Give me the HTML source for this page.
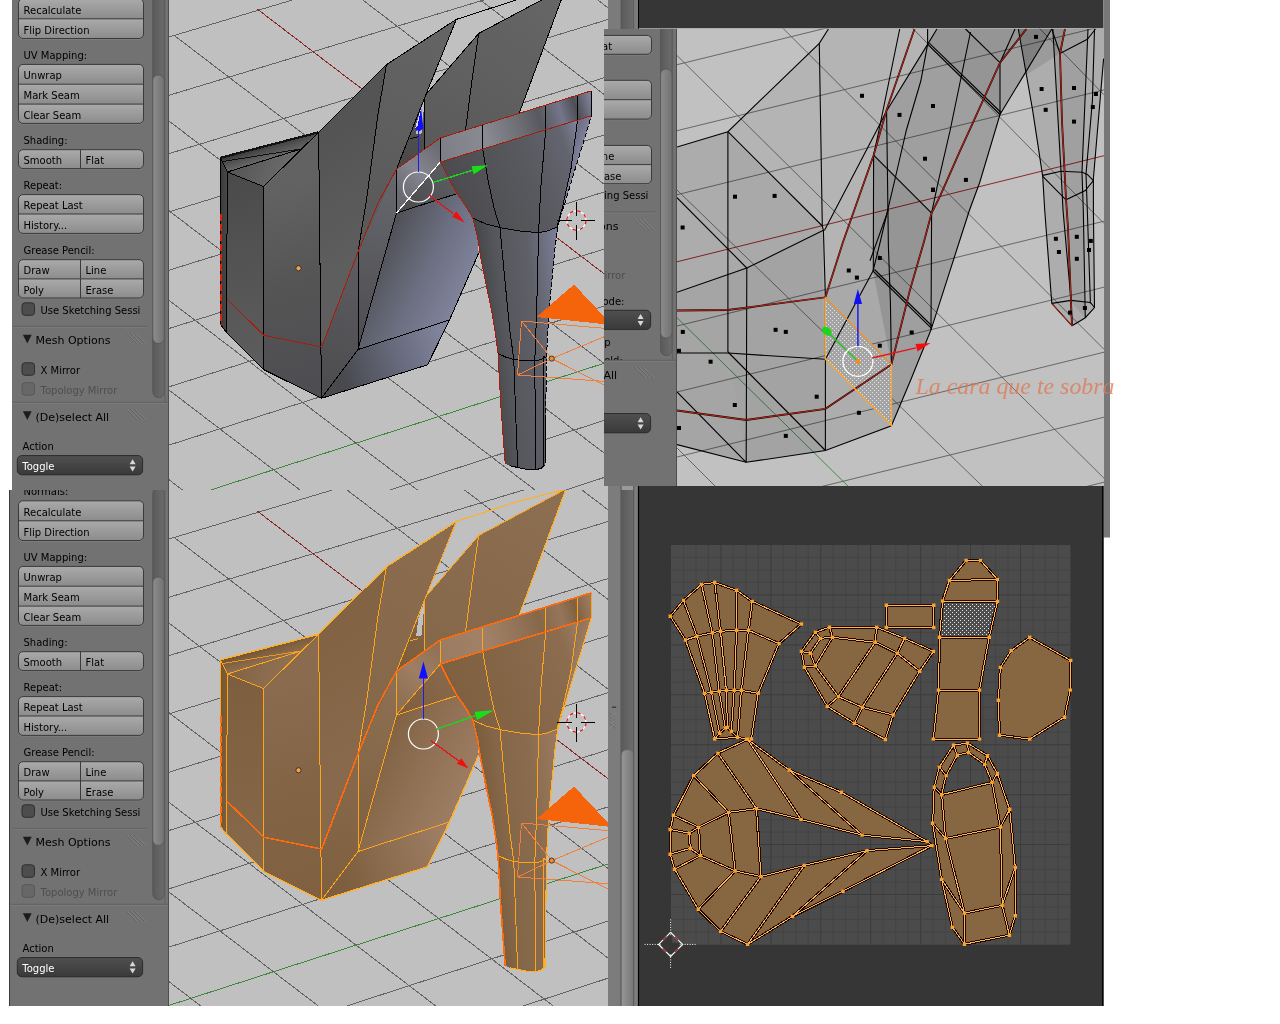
<!DOCTYPE html>
<html><head><meta charset="utf-8"><title>Blender UV unwrap</title>
<style>html,body{margin:0;padding:0;background:#fff;}svg{display:block;filter:contrast(1);font-family:"DejaVu Sans","Liberation Sans",sans-serif;}</style>
</head><body>
<svg width="1280" height="1024" viewBox="0 0 1280 1024">
<defs>
<linearGradient id="gb" x1="0" y1="0" x2="0" y2="1"><stop offset="0" stop-color="#a9a9a9"/><stop offset="1" stop-color="#8b8b8b"/></linearGradient>
<linearGradient id="gd" x1="0" y1="0" x2="0" y2="1"><stop offset="0" stop-color="#505050"/><stop offset="1" stop-color="#393939"/></linearGradient>
<linearGradient id="gtrack" x1="0" y1="0" x2="1" y2="0"><stop offset="0" stop-color="#5a5a5a"/><stop offset="1" stop-color="#6c6c6c"/></linearGradient>
<linearGradient id="gthumb" x1="0" y1="0" x2="1" y2="0"><stop offset="0" stop-color="#8c8c8c"/><stop offset="1" stop-color="#727272"/></linearGradient>
<linearGradient id="gstrip" x1="0" y1="0" x2="1" y2="0"><stop offset="0" stop-color="#808080"/><stop offset="1" stop-color="#6e6e6e"/></linearGradient>
<linearGradient id="gthumb2" x1="0" y1="0" x2="1" y2="0"><stop offset="0" stop-color="#979797"/><stop offset="1" stop-color="#777777"/></linearGradient>
<pattern id="dots" x="0" y="0" width="4" height="4" patternUnits="userSpaceOnUse"><rect width="4" height="4" fill="#4d4d4d"/><rect x="0" y="0" width="1" height="1" fill="#e6e6e6"/><rect x="2" y="2" width="1" height="1" fill="#e6e6e6"/></pattern>
<pattern id="dotsb" x="0" y="0" width="4" height="4" patternUnits="userSpaceOnUse"><rect width="4" height="4" fill="#a4a4a4"/><rect x="0" y="0" width="1" height="1" fill="#e4e4e4"/><rect x="2" y="2" width="1" height="1" fill="#e4e4e4"/></pattern>
<linearGradient id="gbs1" x1="0" y1="0" x2="0" y2="1"><stop offset="0.0000" stop-color="#aaaaaa"/><stop offset="0.9999" stop-color="#8c8c8c"/></linearGradient>
<linearGradient id="gbs2" x1="0" y1="0" x2="0" y2="1"><stop offset="0.0000" stop-color="#aaaaaa"/><stop offset="0.4999" stop-color="#8c8c8c"/><stop offset="0.5000" stop-color="#aaaaaa"/><stop offset="0.9999" stop-color="#8c8c8c"/></linearGradient>
<linearGradient id="gbs3" x1="0" y1="0" x2="0" y2="1"><stop offset="0.0000" stop-color="#aaaaaa"/><stop offset="0.3332" stop-color="#8c8c8c"/><stop offset="0.3333" stop-color="#aaaaaa"/><stop offset="0.6666" stop-color="#8c8c8c"/><stop offset="0.6667" stop-color="#aaaaaa"/><stop offset="0.9999" stop-color="#8c8c8c"/></linearGradient>
<g id="pu">
<rect x="0.0" y="-20.0" width="170.0" height="540.0" fill="#727272" />
<text x="23.5" y="-6.6" fill="#000" font-size="10" >Normals:</text>
<rect x="18.5" y="0.0" width="125.0" height="39.7" rx="4.5" fill="#818181"/>
<rect x="18.5" y="-1.2" width="125.0" height="39.7" rx="4.5" fill="url(#gbs2)" stroke="#3a3a3a" stroke-width="1"/>
<text x="23.5" y="13.5" fill="#000" font-size="10" >Recalculate</text>
<line x1="18.5" y1="18.8" x2="143.5" y2="18.8" stroke="#3a3a3a" stroke-width="1" />
<text x="23.5" y="34.0" fill="#000" font-size="10" >Flip Direction</text>
<text x="23.5" y="59.2" fill="#000" font-size="10" >UV Mapping:</text>
<rect x="18.5" y="65.6" width="125.0" height="59.0" rx="4.5" fill="#818181"/>
<rect x="18.5" y="64.4" width="125.0" height="59.0" rx="4.5" fill="url(#gbs3)" stroke="#3a3a3a" stroke-width="1"/>
<text x="23.5" y="79.1" fill="#000" font-size="10" >Unwrap</text>
<line x1="18.5" y1="84.2" x2="143.5" y2="84.2" stroke="#3a3a3a" stroke-width="1" />
<text x="23.5" y="99.4" fill="#000" font-size="10" >Mark Seam</text>
<line x1="18.5" y1="104.1" x2="143.5" y2="104.1" stroke="#3a3a3a" stroke-width="1" />
<text x="23.5" y="119.3" fill="#000" font-size="10" >Clear Seam</text>
<text x="23.5" y="144.3" fill="#000" font-size="10" >Shading:</text>
<rect x="18.5" y="150.9" width="125.0" height="18.9" rx="4.5" fill="#818181"/>
<rect x="18.5" y="149.7" width="125.0" height="18.9" rx="4.5" fill="url(#gbs1)" stroke="#3a3a3a" stroke-width="1"/>
<text x="23.5" y="164.4" fill="#000" font-size="10" >Smooth</text>
<line x1="80.5" y1="149.7" x2="80.5" y2="168.6" stroke="#3a3a3a" stroke-width="1" />
<text x="85.5" y="164.4" fill="#000" font-size="10" >Flat</text>
<text x="23.5" y="189.0" fill="#000" font-size="10" >Repeat:</text>
<rect x="18.5" y="195.8" width="125.0" height="38.8" rx="4.5" fill="#818181"/>
<rect x="18.5" y="194.6" width="125.0" height="38.8" rx="4.5" fill="url(#gbs2)" stroke="#3a3a3a" stroke-width="1"/>
<text x="23.5" y="209.3" fill="#000" font-size="10" >Repeat Last</text>
<line x1="18.5" y1="214.0" x2="143.5" y2="214.0" stroke="#3a3a3a" stroke-width="1" />
<text x="23.5" y="229.2" fill="#000" font-size="10" >History...</text>
<text x="23.5" y="254.3" fill="#000" font-size="10" >Grease Pencil:</text>
<rect x="18.5" y="260.9" width="125.0" height="38.3" rx="4.5" fill="#818181"/>
<rect x="18.5" y="259.7" width="125.0" height="38.3" rx="4.5" fill="url(#gbs2)" stroke="#3a3a3a" stroke-width="1"/>
<text x="23.5" y="274.4" fill="#000" font-size="10" >Draw</text>
<line x1="80.5" y1="259.7" x2="80.5" y2="278.9" stroke="#3a3a3a" stroke-width="1" />
<text x="85.5" y="274.4" fill="#000" font-size="10" >Line</text>
<line x1="18.5" y1="278.9" x2="143.5" y2="278.9" stroke="#3a3a3a" stroke-width="1" />
<text x="23.5" y="294.1" fill="#000" font-size="10" >Poly</text>
<line x1="80.5" y1="278.9" x2="80.5" y2="298.0" stroke="#3a3a3a" stroke-width="1" />
<text x="85.5" y="294.1" fill="#000" font-size="10" >Erase</text>
<rect x="22.0" y="302.8" width="12.5" height="12.5" rx="3" fill="#4d4d4d" stroke="#2e2e2e" stroke-width="1"/>
<text x="40.5" y="313.8" fill="#000" font-size="10" >Use Sketching Sessi</text>
<line x1="12.0" y1="326.3" x2="147.5" y2="326.3" stroke="#5e5e5e" stroke-width="1" />
<line x1="12.0" y1="327.3" x2="147.5" y2="327.3" stroke="#7a7a7a" stroke-width="1" />
<polygon points="22.9,334.7 31.7,334.7 27.3,343.4" fill="#1c1c1c" />
<text x="35.5" y="344.0" fill="#000" font-size="11" >Mesh Options</text>
<line x1="126.0" y1="333.0" x2="137.0" y2="344.0" stroke="#646464" stroke-width="1" />
<line x1="127.2" y1="333.0" x2="138.2" y2="344.0" stroke="#828282" stroke-width="1" />
<line x1="130.0" y1="333.0" x2="141.0" y2="344.0" stroke="#646464" stroke-width="1" />
<line x1="131.2" y1="333.0" x2="142.2" y2="344.0" stroke="#828282" stroke-width="1" />
<line x1="134.0" y1="333.0" x2="145.0" y2="344.0" stroke="#646464" stroke-width="1" />
<line x1="135.2" y1="333.0" x2="146.2" y2="344.0" stroke="#828282" stroke-width="1" />
<rect x="22.0" y="362.8" width="12.5" height="12.5" rx="3" fill="#4d4d4d" stroke="#2e2e2e" stroke-width="1"/>
<text x="40.5" y="373.8" fill="#000" font-size="10" >X Mirror</text>
<rect x="22.0" y="382.7" width="12.5" height="12.5" rx="3" fill="#676767" stroke="#575757" stroke-width="1"/>
<text x="40.5" y="393.7" fill="#4e4e4e" font-size="10" >Topology Mirror</text>
<text x="23.5" y="419.3" fill="#000" font-size="10" >Edge Select Mode:</text>
<rect x="17.3" y="425.8" width="125.3" height="19.4" rx="4.5" fill="#818181"/>
<rect x="17.3" y="424.6" width="125.3" height="19.4" rx="4.5" fill="url(#gd)" stroke="#2b2b2b" stroke-width="1"/>
<polygon points="129.6,433.2 135.6,433.2 132.6,428.2" fill="#d8d8d8" />
<polygon points="129.6,435.4 135.6,435.4 132.6,440.4" fill="#d8d8d8" />
<rect x="22.0" y="449.5" width="12.5" height="12.5" rx="3" fill="#4d4d4d" stroke="#2e2e2e" stroke-width="1"/>
<text x="40.5" y="460.5" fill="#000" font-size="10" >Live Unwrap</text>
<text x="23.5" y="478.0" fill="#000" font-size="10" >Double Threshold:</text>
</g>
<g id="pl">
<rect x="0.0" y="402.5" width="170.0" height="120.0" fill="#727272" />
<line x1="0.0" y1="402.3" x2="170.0" y2="402.3" stroke="#5a5a5a" stroke-width="1" />
<line x1="0.0" y1="403.3" x2="170.0" y2="403.3" stroke="#7c7c7c" stroke-width="1" />
<polygon points="22.9,411.2 31.7,411.2 27.3,419.9" fill="#1c1c1c" />
<text x="35.5" y="420.5" fill="#000" font-size="11" >(De)select All</text>
<line x1="126.0" y1="409.0" x2="137.0" y2="420.0" stroke="#646464" stroke-width="1" />
<line x1="127.2" y1="409.0" x2="138.2" y2="420.0" stroke="#828282" stroke-width="1" />
<line x1="130.0" y1="409.0" x2="141.0" y2="420.0" stroke="#646464" stroke-width="1" />
<line x1="131.2" y1="409.0" x2="142.2" y2="420.0" stroke="#828282" stroke-width="1" />
<line x1="134.0" y1="409.0" x2="145.0" y2="420.0" stroke="#646464" stroke-width="1" />
<line x1="135.2" y1="409.0" x2="146.2" y2="420.0" stroke="#828282" stroke-width="1" />
<text x="22.5" y="449.5" fill="#000" font-size="10" >Action</text>
<rect x="17.3" y="456.8" width="125.3" height="19.3" rx="4.5" fill="#818181"/>
<rect x="17.3" y="455.6" width="125.3" height="19.3" rx="4.5" fill="url(#gd)" stroke="#2b2b2b" stroke-width="1"/>
<text x="22.3" y="469.9" fill="#fff" font-size="10" >Toggle</text>
<polygon points="129.6,464.2 135.6,464.2 132.6,459.2" fill="#d8d8d8" />
<polygon points="129.6,466.4 135.6,466.4 132.6,471.4" fill="#d8d8d8" />
</g>
<clipPath id="clipA"><rect x="12" y="0" width="596" height="490"/></clipPath>
<clipPath id="clipC"><rect x="9" y="490" width="599" height="516"/></clipPath>
<clipPath id="clipAv"><rect x="169" y="0" width="439" height="490"/></clipPath>
<clipPath id="clipCv"><rect x="169" y="490" width="439" height="516"/></clipPath>
<clipPath id="clipBp"><rect x="604" y="29" width="73" height="457"/></clipPath>
<clipPath id="clipBv"><rect x="677" y="28.5" width="427" height="457.5"/></clipPath>
<clipPath id="clipD"><rect x="639" y="486" width="464" height="520"/></clipPath>
</defs>
<rect x="0.0" y="0.0" width="1280.0" height="1024.0" fill="#ffffff" />
<g clip-path="url(#clipA)">
<g transform="translate(0,0)">
<use href="#pu"/>
<rect x="152.8" y="-14.0" width="11.5" height="411.5" rx="5.5" fill="url(#gtrack)" stroke="#525252" stroke-width="0.8"/>
<rect x="152.8" y="75.0" width="11.5" height="268.5" rx="5.5" fill="url(#gthumb)" stroke="#545454" stroke-width="0.8"/>
<line x1="164.9" y1="-20.0" x2="164.9" y2="402.0" stroke="#5e5e5e" stroke-width="0.8" />
<use href="#pl"/>
<line x1="168.6" y1="-20.0" x2="168.6" y2="520.0" stroke="#4a4a4a" stroke-width="1" />
</g>
<g clip-path="url(#clipAv)"><g transform="translate(0,0)" shape-rendering="crispEdges">
<rect x="160.0" y="-20.0" width="460.0" height="540.0" fill="#c0c0c0" />
<line x1="169.0" y1="678.3" x2="608.0" y2="533.3" stroke="#646464" stroke-width="1" />
<line x1="169.0" y1="620.0" x2="608.0" y2="476.2" stroke="#646464" stroke-width="1" />
<line x1="169.0" y1="561.7" x2="608.0" y2="419.1" stroke="#646464" stroke-width="1" />
<line x1="169.0" y1="503.4" x2="608.0" y2="362.0" stroke="#3d8a3d" stroke-width="1" />
<line x1="169.0" y1="445.1" x2="608.0" y2="304.9" stroke="#646464" stroke-width="1" />
<line x1="169.0" y1="386.8" x2="608.0" y2="247.8" stroke="#646464" stroke-width="1" />
<line x1="169.0" y1="328.5" x2="608.0" y2="190.7" stroke="#646464" stroke-width="1" />
<line x1="169.0" y1="270.2" x2="608.0" y2="133.7" stroke="#646464" stroke-width="1" />
<line x1="169.0" y1="211.9" x2="608.0" y2="76.6" stroke="#646464" stroke-width="1" />
<line x1="169.0" y1="153.6" x2="608.0" y2="19.5" stroke="#646464" stroke-width="1" />
<line x1="169.0" y1="95.3" x2="608.0" y2="-37.6" stroke="#646464" stroke-width="1" />
<line x1="169.0" y1="37.0" x2="608.0" y2="-94.7" stroke="#646464" stroke-width="1" />
<line x1="-321.5" y1="195.1" x2="91.2" y2="510.0" stroke="#646464" stroke-width="1" />
<line x1="-238.8" y1="168.5" x2="208.7" y2="510.0" stroke="#646464" stroke-width="1" />
<line x1="-156.1" y1="142.0" x2="326.2" y2="510.0" stroke="#646464" stroke-width="1" />
<line x1="-73.4" y1="115.4" x2="443.7" y2="510.0" stroke="#646464" stroke-width="1" />
<line x1="9.3" y1="88.9" x2="561.2" y2="510.0" stroke="#646464" stroke-width="1" />
<line x1="92.0" y1="62.3" x2="678.7" y2="510.0" stroke="#646464" stroke-width="1" />
<line x1="174.7" y1="35.8" x2="796.2" y2="510.0" stroke="#646464" stroke-width="1" />
<line x1="257.4" y1="9.2" x2="913.7" y2="510.0" stroke="#8a2a2a" stroke-width="1" />
<line x1="340.1" y1="-17.3" x2="1031.2" y2="510.0" stroke="#646464" stroke-width="1" />
<line x1="422.8" y1="-43.9" x2="1148.7" y2="510.0" stroke="#646464" stroke-width="1" />
<line x1="505.5" y1="-70.4" x2="1266.2" y2="510.0" stroke="#646464" stroke-width="1" />
<line x1="588.2" y1="-97.0" x2="1383.7" y2="510.0" stroke="#646464" stroke-width="1" />
<linearGradient id="f1" gradientUnits="userSpaceOnUse" x1="424.0" y1="150.0" x2="478.0" y2="40.0"><stop offset="0" stop-color="#5a5a5a"/><stop offset="1" stop-color="#636363"/></linearGradient>
<polygon points="424.5,148.9 424.5,97.5 425.9,94.5 478.7,33.5 465.5,130.2" fill="url(#f1)" />
<linearGradient id="f2" gradientUnits="userSpaceOnUse" x1="470.0" y1="120.0" x2="560.0" y2="0.0"><stop offset="0" stop-color="#5c5c5c"/><stop offset="1" stop-color="#666666"/></linearGradient>
<polygon points="478.7,33.5 566.0,-13.0 519.3,113.0 465.5,130.2" fill="url(#f2)" />
<linearGradient id="f3" gradientUnits="userSpaceOnUse" x1="400.0" y1="170.0" x2="425.0" y2="100.0"><stop offset="0" stop-color="#474747"/><stop offset="1" stop-color="#585858"/></linearGradient>
<polygon points="425.9,94.5 424.5,97.5 424.5,148.9 396.5,169.0" fill="url(#f3)" />
<polygon points="424.8,98.0 421.5,133.5 416.0,134.5 418.2,117.0" fill="#c0c0c0" />
<linearGradient id="f4" gradientUnits="userSpaceOnUse" x1="320.0" y1="140.0" x2="385.0" y2="240.0"><stop offset="0" stop-color="#545454"/><stop offset="1" stop-color="#5e5e5e"/></linearGradient>
<polygon points="318.6,132.3 386.5,64.6 358.0,252.0 321.7,347.0 320.0,300.0" fill="url(#f4)" />
<linearGradient id="f5" gradientUnits="userSpaceOnUse" x1="370.0" y1="220.0" x2="450.0" y2="30.0"><stop offset="0" stop-color="#5a5a5a"/><stop offset="1" stop-color="#646464"/></linearGradient>
<polygon points="386.5,64.6 456.3,19.4 425.9,94.5 396.5,169.0 358.0,252.0" fill="url(#f5)" />
<linearGradient id="f6" gradientUnits="userSpaceOnUse" x1="262.0" y1="143.0" x2="268.0" y2="163.0"><stop offset="0" stop-color="#262626"/><stop offset="0.35" stop-color="#4a4a4a"/><stop offset="1" stop-color="#727272"/></linearGradient>
<polygon points="220.3,157.8 318.6,132.3 301.2,148.9 227.4,172.0" fill="url(#f6)" />
<linearGradient id="f7" gradientUnits="userSpaceOnUse" x1="240.0" y1="165.0" x2="290.0" y2="185.0"><stop offset="0" stop-color="#585858"/><stop offset="1" stop-color="#6e6e6e"/></linearGradient>
<polygon points="227.4,172.0 301.2,148.9 263.5,186.5" fill="url(#f7)" />
<linearGradient id="f8" gradientUnits="userSpaceOnUse" x1="220.0" y1="200.0" x2="228.0" y2="200.0"><stop offset="0" stop-color="#3a3a3a"/><stop offset="1" stop-color="#4a4a4a"/></linearGradient>
<polygon points="220.3,157.8 227.4,172.0 226.4,332.3 221.0,325.0 220.6,240.0" fill="url(#f8)" />
<linearGradient id="f9" gradientUnits="userSpaceOnUse" x1="227.0" y1="180.0" x2="268.0" y2="360.0"><stop offset="0" stop-color="#4b4b4b"/><stop offset="1" stop-color="#5d5d5d"/></linearGradient>
<polygon points="227.4,172.0 263.5,186.5 264.0,369.8 226.4,332.3" fill="url(#f9)" />
<linearGradient id="f10" gradientUnits="userSpaceOnUse" x1="270.0" y1="190.0" x2="320.0" y2="395.0"><stop offset="0" stop-color="#626262"/><stop offset="0.45" stop-color="#555555"/><stop offset="1" stop-color="#4d4d52"/></linearGradient>
<polygon points="263.5,186.5 301.2,148.9 318.6,132.3 320.4,300.0 321.7,347.0 321.5,398.3 264.0,369.8" fill="url(#f10)" />
<linearGradient id="f11" gradientUnits="userSpaceOnUse" x1="325.0" y1="380.0" x2="358.0" y2="260.0"><stop offset="0" stop-color="#4e4e50"/><stop offset="1" stop-color="#5c5c62"/></linearGradient>
<polygon points="321.7,347.0 358.0,252.0 358.0,349.5 321.5,398.3" fill="url(#f11)" />
<linearGradient id="f12" gradientUnits="userSpaceOnUse" x1="362.0" y1="330.0" x2="398.0" y2="180.0"><stop offset="0" stop-color="#505052"/><stop offset="1" stop-color="#66676e"/></linearGradient>
<polygon points="358.0,252.0 396.5,169.0 396.5,213.0 358.0,349.5" fill="url(#f12)" />
<linearGradient id="f13" gradientUnits="userSpaceOnUse" x1="380.0" y1="250.0" x2="470.0" y2="295.0"><stop offset="0" stop-color="#505157"/><stop offset="0.5" stop-color="#6c6f81"/><stop offset="1" stop-color="#8387a0"/></linearGradient>
<polygon points="396.5,213.0 457.1,193.6 466.0,206.5 472.9,218.2 477.5,237.0 478.7,253.0 449.5,320.0 358.0,349.5" fill="url(#f13)" />
<linearGradient id="f14" gradientUnits="userSpaceOnUse" x1="345.0" y1="380.0" x2="445.0" y2="345.0"><stop offset="0" stop-color="#494a50"/><stop offset="0.55" stop-color="#686b7d"/><stop offset="1" stop-color="#80849c"/></linearGradient>
<polygon points="358.0,349.5 449.5,320.0 427.5,364.8 321.5,398.3" fill="url(#f14)" />
<linearGradient id="f15" gradientUnits="userSpaceOnUse" x1="400.0" y1="195.0" x2="440.0" y2="150.0"><stop offset="0" stop-color="#6a6b72"/><stop offset="0.5" stop-color="#84858e"/><stop offset="1" stop-color="#6c6d74"/></linearGradient>
<polygon points="396.5,169.0 440.3,138.0 440.4,162.0 396.5,213.0" fill="url(#f15)" />
<linearGradient id="f16" gradientUnits="userSpaceOnUse" x1="400.0" y1="210.0" x2="455.0" y2="175.0"><stop offset="0" stop-color="#4a4a4c"/><stop offset="1" stop-color="#5c5d62"/></linearGradient>
<polygon points="396.5,213.0 440.4,162.0 448.5,178.0 457.1,193.6" fill="url(#f16)" />
<linearGradient id="f17" gradientUnits="userSpaceOnUse" x1="440.0" y1="150.0" x2="591.0" y2="103.0"><stop offset="0" stop-color="#7e7f86"/><stop offset="0.3" stop-color="#898a92"/><stop offset="0.52" stop-color="#6e6f75"/><stop offset="0.66" stop-color="#58595e"/><stop offset="0.8" stop-color="#74758a"/><stop offset="0.9" stop-color="#4e4e56"/><stop offset="1" stop-color="#7c7e94"/></linearGradient>
<polygon points="440.3,138.0 591.4,90.8 591.4,115.8 440.4,162.0" fill="url(#f17)" />
<linearGradient id="f18" gradientUnits="userSpaceOnUse" x1="470.0" y1="300.0" x2="560.0" y2="290.0"><stop offset="0" stop-color="#3b3b3d"/><stop offset="0.35" stop-color="#56575c"/><stop offset="0.7" stop-color="#5f6068"/><stop offset="1" stop-color="#787b92"/></linearGradient>
<polygon points="440.4,162.0 448.5,178.0 457.1,193.6 466.0,206.5 472.9,218.2 477.5,237.0 480.7,257.0 486.0,284.0 491.9,311.9 495.5,334.0 498.0,353.4 501.0,408.0 505.2,463.6 510.0,465.8 517.7,467.5 526.0,469.2 535.6,469.8 541.0,468.3 545.0,465.2 545.6,420.0 546.6,356.6 547.7,332.0 550.0,300.0 552.8,271.0 555.0,248.0 557.9,226.6 561.0,214.0 565.0,203.0 573.0,176.0 582.0,147.0 591.4,115.8" fill="url(#f18)" />
<linearGradient id="f19" gradientUnits="userSpaceOnUse" x1="450.0" y1="200.0" x2="590.0" y2="150.0"><stop offset="0" stop-color="#4b4b4e"/><stop offset="0.55" stop-color="#58595e"/><stop offset="0.85" stop-color="#63646e"/><stop offset="1" stop-color="#8286a0"/></linearGradient>
<polygon points="440.4,162.0 482.7,149.1 545.7,129.8 591.4,115.8 582.0,147.0 573.0,176.0 565.0,203.0 557.9,226.6 538.6,232.7 500.0,227.6 472.9,218.2 457.1,193.6" fill="url(#f19)" />
<linearGradient id="f20" gradientUnits="userSpaceOnUse" x1="565.0" y1="170.0" x2="580.0" y2="175.0"><stop offset="0" stop-color="#70728a"/><stop offset="1" stop-color="#8a8da6"/></linearGradient>
<polygon points="577.6,120.0 591.4,115.8 582.0,147.0 573.0,176.0 565.0,203.0 557.9,226.6 557.0,227.0 563.0,205.0 571.0,168.6" fill="url(#f20)" />
<polyline points="220.3,157.8 318.6,132.3" fill="none" stroke="#111" stroke-width="2.2" />
<polyline points="220.3,157.8 227.4,172.0" fill="none" stroke="#000000" stroke-width="1" />
<polyline points="227.4,172.0 263.5,186.5" fill="none" stroke="#000000" stroke-width="1" />
<polyline points="227.4,172.0 301.2,148.9" fill="none" stroke="#000000" stroke-width="1" />
<polyline points="263.5,186.5 318.6,132.3" fill="none" stroke="#000000" stroke-width="1" />
<polyline points="222.3,161.6 301.2,148.9" fill="none" stroke="#000000" stroke-width="0.8" />
<polyline points="227.4,172.0 226.4,332.3" fill="none" stroke="#000000" stroke-width="1" />
<polyline points="263.5,186.5 264.0,369.8" fill="none" stroke="#000000" stroke-width="1" />
<polyline points="318.6,132.3 320.4,300.0 321.5,398.3" fill="none" stroke="#000000" stroke-width="1" />
<polyline points="220.3,157.8 220.6,240.0 221.0,325.0 226.4,332.3 264.0,369.8 321.5,398.3 427.5,364.8 449.5,320.0" fill="none" stroke="#000000" stroke-width="1" />
<polyline points="321.5,398.3 358.0,349.5" fill="none" stroke="#000000" stroke-width="1" />
<polyline points="358.0,349.5 449.5,320.0" fill="none" stroke="#000000" stroke-width="1" />
<polyline points="358.0,252.0 358.0,349.5" fill="none" stroke="#000000" stroke-width="1" />
<polyline points="358.0,349.5 396.5,213.0" fill="none" stroke="#000000" stroke-width="1" />
<polyline points="318.6,132.3 386.5,64.6 456.3,19.4" fill="none" stroke="#000000" stroke-width="1" />
<polyline points="386.5,64.6 378.0,114.0 366.5,200.0 358.0,252.0" fill="none" stroke="#000000" stroke-width="1" />
<polyline points="456.3,19.4 425.9,94.5 396.5,169.0" fill="none" stroke="#000000" stroke-width="1" />
<polyline points="456.3,19.4 516.3,0.0 566.0,-13.0" fill="none" stroke="#000000" stroke-width="1" />
<polyline points="425.9,94.5 478.7,33.5 566.0,-13.0" fill="none" stroke="#000000" stroke-width="1" />
<polyline points="478.7,33.5 472.0,80.0 465.5,130.2" fill="none" stroke="#000000" stroke-width="1" />
<polyline points="566.0,-13.0 519.3,113.0" fill="none" stroke="#000000" stroke-width="1" />
<polyline points="424.5,97.5 424.5,148.9" fill="none" stroke="#000000" stroke-width="1" />
<polyline points="409.6,139.1 418.4,136.5" fill="none" stroke="#000000" stroke-width="1" />
<polyline points="396.5,169.0 396.5,213.0" fill="none" stroke="#000000" stroke-width="1" />
<polyline points="440.3,138.0 440.3,162.0" fill="none" stroke="#000000" stroke-width="1" />
<polyline points="482.7,124.8 482.7,149.1" fill="none" stroke="#000000" stroke-width="1" />
<polyline points="545.7,105.1 545.7,129.8" fill="none" stroke="#000000" stroke-width="1" />
<polyline points="577.6,95.1 577.6,120.0" fill="none" stroke="#000000" stroke-width="1" />
<polyline points="591.4,90.8 591.4,115.8" fill="none" stroke="#000000" stroke-width="1" />
<polyline points="396.5,213.0 457.1,193.6" fill="none" stroke="#000000" stroke-width="1" />
<polyline points="478.7,253.0 449.5,320.0" fill="none" stroke="#000000" stroke-width="1" />
<polyline points="482.7,149.1 488.0,180.0 494.0,208.0 500.0,227.6 504.0,271.0 510.0,332.0 513.8,359.5 515.5,410.0 517.7,467.5" fill="none" stroke="#000000" stroke-width="1" />
<polyline points="545.7,129.8 540.6,190.0 538.6,232.7 536.6,311.9 534.8,361.0 535.6,469.8" fill="none" stroke="#000000" stroke-width="1" />
<polyline points="577.6,120.0 571.0,168.6 563.0,205.0 557.0,227.0" fill="none" stroke="#000000" stroke-width="1" />
<polyline points="472.9,218.2 486.0,224.0 500.0,227.6 520.0,231.0 538.6,232.7 549.0,230.5 557.9,226.6" fill="none" stroke="#000000" stroke-width="1" />
<polyline points="498.0,353.4 506.0,357.2 513.8,359.5 524.0,360.8 534.8,361.0 541.0,359.5 546.6,356.6" fill="none" stroke="#000000" stroke-width="1" />
<polyline points="544.0,356.5 543.4,467.5" fill="none" stroke="#000000" stroke-width="1" />
<polyline points="510.0,465.8 517.7,467.5 526.0,469.2 535.6,469.8 541.0,468.3 545.0,465.2" fill="none" stroke="#000000" stroke-width="1" />
<polyline points="545.6,420.0 546.6,356.6 547.7,332.0 550.0,300.0 552.8,271.0 555.0,248.0 557.9,226.6 561.0,214.0 565.0,203.0 573.0,176.0 582.0,147.0 591.4,115.8" fill="none" stroke="#000000" stroke-width="1" stroke-dasharray="5 2"/>
<polyline points="545.0,465.2 545.6,420.0" fill="none" stroke="#000000" stroke-width="1" />
<polyline points="440.4,162.0 396.5,213.0" fill="none" stroke="#ffffff" stroke-width="1.2" />
<polyline points="226.4,298.7 264.0,335.3 321.7,347.0 358.0,252.0 378.0,203.0 396.5,169.0 440.3,138.0 591.4,90.8" fill="none" stroke="#a81c0c" stroke-width="1.0" />
<polyline points="591.4,115.8 440.4,162.0" fill="none" stroke="#a81c0c" stroke-width="1.0" />
<polyline points="440.4,162.0 448.5,178.0 457.1,193.6 466.0,206.5 472.9,218.2 477.5,237.0 480.7,257.0 486.0,284.0 491.9,311.9 495.5,334.0 498.0,353.4 501.0,408.0 505.2,463.6" fill="none" stroke="#a81c0c" stroke-width="1.0" />
<polyline points="221.0,214.0 221.2,300.0 221.0,325.0" fill="none" stroke="#d8200a" stroke-width="1.6" stroke-dasharray="7 3"/>
<circle shape-rendering="geometricPrecision" cx="298.5" cy="268.3" r="2.6" fill="#f0a050" stroke="#222" stroke-width="0.8"/>
<polygon points="574.0,284.5 536.6,317.0 612.0,325.0" fill="#f5640a" />
<polyline points="521.5,321.0 517.5,375.0" fill="none" stroke="#ee7f3c" stroke-width="1" />
<polyline points="521.5,321.0 612.0,329.0" fill="none" stroke="#ee7f3c" stroke-width="1" />
<polyline points="517.5,375.0 612.0,382.0" fill="none" stroke="#ee7f3c" stroke-width="1" />
<polyline points="521.5,321.0 551.7,358.6 612.0,389.0" fill="none" stroke="#ee7f3c" stroke-width="1" />
<polyline points="517.5,375.0 551.7,358.6 612.0,333.5" fill="none" stroke="#ee7f3c" stroke-width="1" />
<circle shape-rendering="geometricPrecision" cx="551.7" cy="358.6" r="2.6" fill="#f08a30" stroke="#222" stroke-width="0.8"/>
<circle shape-rendering="geometricPrecision" cx="576.4" cy="220.5" r="9.6" fill="none" stroke="#ffffff" stroke-width="1.2"/>
<circle shape-rendering="geometricPrecision" cx="576.4" cy="220.5" r="9.6" fill="none" stroke="#e01010" stroke-width="1.2" stroke-dasharray="3.8 3.8"/>
<line x1="580.9" y1="220.5" x2="595.4" y2="220.5" stroke="#000" stroke-width="1" />
<line x1="571.9" y1="220.5" x2="557.4" y2="220.5" stroke="#000" stroke-width="1" />
<line x1="576.4" y1="225.0" x2="576.4" y2="239.5" stroke="#000" stroke-width="1" />
<line x1="576.4" y1="216.0" x2="576.4" y2="201.5" stroke="#000" stroke-width="1" />
<circle shape-rendering="geometricPrecision" cx="418.4" cy="187.0" r="15" fill="none" stroke="#fff" stroke-width="1.2"/>
<line x1="418.4" y1="172.0" x2="418.4" y2="130.0" stroke="#1c1cf0" stroke-width="1.4" />
<polygon points="421.0,108.0 415.0,128.5 419.0,131.5 423.5,128.5" fill="#1010ff" shape-rendering="geometricPrecision"/>
<polygon points="421.0,108.0 415.0,128.5 417.5,126.0" fill="#dde" />
<line x1="432.8" y1="182.6" x2="474.0" y2="169.8" stroke="#20d020" stroke-width="1.4" />
<polygon points="488.0,165.3 471.6,166.2 473.6,174.2" fill="#18e018" shape-rendering="geometricPrecision"/>
<line x1="428.5" y1="194.7" x2="453.0" y2="213.5" stroke="#e01818" stroke-width="1.4" />
<polygon points="464.6,222.6 456.4,211.2 452.0,216.8" fill="#f01010" shape-rendering="geometricPrecision"/>
</g></g>
</g>
<g clip-path="url(#clipC)">
<g transform="translate(0,502)">
<use href="#pu"/>
<rect x="152.8" y="-14.0" width="11.5" height="411.5" rx="5.5" fill="url(#gtrack)" stroke="#525252" stroke-width="0.8"/>
<rect x="152.8" y="75.0" width="11.5" height="268.5" rx="5.5" fill="url(#gthumb)" stroke="#545454" stroke-width="0.8"/>
<line x1="164.9" y1="-20.0" x2="164.9" y2="402.0" stroke="#5e5e5e" stroke-width="0.8" />
<use href="#pl"/>
<line x1="168.6" y1="-20.0" x2="168.6" y2="520.0" stroke="#4a4a4a" stroke-width="1" />
</g>
<g clip-path="url(#clipCv)"><g transform="translate(0,502)" shape-rendering="crispEdges">
<rect x="160.0" y="-20.0" width="460.0" height="540.0" fill="#c0c0c0" />
<line x1="169.0" y1="678.3" x2="608.0" y2="533.3" stroke="#646464" stroke-width="1" />
<line x1="169.0" y1="620.0" x2="608.0" y2="476.2" stroke="#646464" stroke-width="1" />
<line x1="169.0" y1="561.7" x2="608.0" y2="419.1" stroke="#646464" stroke-width="1" />
<line x1="169.0" y1="503.4" x2="608.0" y2="362.0" stroke="#3d8a3d" stroke-width="1" />
<line x1="169.0" y1="445.1" x2="608.0" y2="304.9" stroke="#646464" stroke-width="1" />
<line x1="169.0" y1="386.8" x2="608.0" y2="247.8" stroke="#646464" stroke-width="1" />
<line x1="169.0" y1="328.5" x2="608.0" y2="190.7" stroke="#646464" stroke-width="1" />
<line x1="169.0" y1="270.2" x2="608.0" y2="133.7" stroke="#646464" stroke-width="1" />
<line x1="169.0" y1="211.9" x2="608.0" y2="76.6" stroke="#646464" stroke-width="1" />
<line x1="169.0" y1="153.6" x2="608.0" y2="19.5" stroke="#646464" stroke-width="1" />
<line x1="169.0" y1="95.3" x2="608.0" y2="-37.6" stroke="#646464" stroke-width="1" />
<line x1="169.0" y1="37.0" x2="608.0" y2="-94.7" stroke="#646464" stroke-width="1" />
<line x1="-321.5" y1="195.1" x2="91.2" y2="510.0" stroke="#646464" stroke-width="1" />
<line x1="-238.8" y1="168.5" x2="208.7" y2="510.0" stroke="#646464" stroke-width="1" />
<line x1="-156.1" y1="142.0" x2="326.2" y2="510.0" stroke="#646464" stroke-width="1" />
<line x1="-73.4" y1="115.4" x2="443.7" y2="510.0" stroke="#646464" stroke-width="1" />
<line x1="9.3" y1="88.9" x2="561.2" y2="510.0" stroke="#646464" stroke-width="1" />
<line x1="92.0" y1="62.3" x2="678.7" y2="510.0" stroke="#646464" stroke-width="1" />
<line x1="174.7" y1="35.8" x2="796.2" y2="510.0" stroke="#646464" stroke-width="1" />
<line x1="257.4" y1="9.2" x2="913.7" y2="510.0" stroke="#8a2a2a" stroke-width="1" />
<line x1="340.1" y1="-17.3" x2="1031.2" y2="510.0" stroke="#646464" stroke-width="1" />
<line x1="422.8" y1="-43.9" x2="1148.7" y2="510.0" stroke="#646464" stroke-width="1" />
<line x1="505.5" y1="-70.4" x2="1266.2" y2="510.0" stroke="#646464" stroke-width="1" />
<line x1="588.2" y1="-97.0" x2="1383.7" y2="510.0" stroke="#646464" stroke-width="1" />
<linearGradient id="f21" gradientUnits="userSpaceOnUse" x1="424.0" y1="150.0" x2="478.0" y2="40.0"><stop offset="0" stop-color="#856749"/><stop offset="1" stop-color="#8a6c4e"/></linearGradient>
<polygon points="424.5,148.9 424.5,97.5 425.9,94.5 478.7,33.5 465.5,130.2" fill="url(#f21)" />
<linearGradient id="f22" gradientUnits="userSpaceOnUse" x1="470.0" y1="120.0" x2="560.0" y2="0.0"><stop offset="0" stop-color="#87684a"/><stop offset="1" stop-color="#8c6e50"/></linearGradient>
<polygon points="478.7,33.5 566.0,-13.0 519.3,113.0 465.5,130.2" fill="url(#f22)" />
<linearGradient id="f23" gradientUnits="userSpaceOnUse" x1="400.0" y1="170.0" x2="425.0" y2="100.0"><stop offset="0" stop-color="#7b5d3c"/><stop offset="1" stop-color="#846647"/></linearGradient>
<polygon points="425.9,94.5 424.5,97.5 424.5,148.9 396.5,169.0" fill="url(#f23)" />
<polygon points="424.8,98.0 421.5,133.5 416.0,134.5 418.2,117.0" fill="#c0c0c0" />
<linearGradient id="f24" gradientUnits="userSpaceOnUse" x1="320.0" y1="140.0" x2="385.0" y2="240.0"><stop offset="0" stop-color="#826445"/><stop offset="1" stop-color="#88694b"/></linearGradient>
<polygon points="318.6,132.3 386.5,64.6 358.0,252.0 321.7,347.0 320.0,300.0" fill="url(#f24)" />
<linearGradient id="f25" gradientUnits="userSpaceOnUse" x1="370.0" y1="220.0" x2="450.0" y2="30.0"><stop offset="0" stop-color="#856749"/><stop offset="1" stop-color="#8b6c4f"/></linearGradient>
<polygon points="386.5,64.6 456.3,19.4 425.9,94.5 396.5,169.0 358.0,252.0" fill="url(#f25)" />
<linearGradient id="f26" gradientUnits="userSpaceOnUse" x1="262.0" y1="143.0" x2="268.0" y2="163.0"><stop offset="0" stop-color="#684b27"/><stop offset="0.35" stop-color="#7c5e3e"/><stop offset="1" stop-color="#937458"/></linearGradient>
<polygon points="220.3,157.8 318.6,132.3 301.2,148.9 227.4,172.0" fill="url(#f26)" />
<linearGradient id="f27" gradientUnits="userSpaceOnUse" x1="240.0" y1="165.0" x2="290.0" y2="185.0"><stop offset="0" stop-color="#846647"/><stop offset="1" stop-color="#917255"/></linearGradient>
<polygon points="227.4,172.0 301.2,148.9 263.5,186.5" fill="url(#f27)" />
<linearGradient id="f28" gradientUnits="userSpaceOnUse" x1="220.0" y1="200.0" x2="228.0" y2="200.0"><stop offset="0" stop-color="#735634"/><stop offset="1" stop-color="#7c5e3e"/></linearGradient>
<polygon points="220.3,157.8 227.4,172.0 226.4,332.3 221.0,325.0 220.6,240.0" fill="url(#f28)" />
<linearGradient id="f29" gradientUnits="userSpaceOnUse" x1="227.0" y1="180.0" x2="268.0" y2="360.0"><stop offset="0" stop-color="#7d5f3f"/><stop offset="1" stop-color="#87694b"/></linearGradient>
<polygon points="227.4,172.0 263.5,186.5 264.0,369.8 226.4,332.3" fill="url(#f29)" />
<linearGradient id="f30" gradientUnits="userSpaceOnUse" x1="270.0" y1="190.0" x2="320.0" y2="395.0"><stop offset="0" stop-color="#8a6b4e"/><stop offset="0.45" stop-color="#836445"/><stop offset="1" stop-color="#7f6141"/></linearGradient>
<polygon points="263.5,186.5 301.2,148.9 318.6,132.3 320.4,300.0 321.7,347.0 321.5,398.3 264.0,369.8" fill="url(#f30)" />
<linearGradient id="f31" gradientUnits="userSpaceOnUse" x1="325.0" y1="380.0" x2="358.0" y2="260.0"><stop offset="0" stop-color="#7f6141"/><stop offset="1" stop-color="#88694b"/></linearGradient>
<polygon points="321.7,347.0 358.0,252.0 358.0,349.5 321.5,398.3" fill="url(#f31)" />
<linearGradient id="f32" gradientUnits="userSpaceOnUse" x1="362.0" y1="330.0" x2="398.0" y2="180.0"><stop offset="0" stop-color="#806243"/><stop offset="1" stop-color="#8d6f52"/></linearGradient>
<polygon points="358.0,252.0 396.5,169.0 396.5,213.0 358.0,349.5" fill="url(#f32)" />
<linearGradient id="f33" gradientUnits="userSpaceOnUse" x1="380.0" y1="250.0" x2="470.0" y2="295.0"><stop offset="0" stop-color="#816344"/><stop offset="0.5" stop-color="#917256"/><stop offset="1" stop-color="#9e7f65"/></linearGradient>
<polygon points="396.5,213.0 457.1,193.6 466.0,206.5 472.9,218.2 477.5,237.0 478.7,253.0 449.5,320.0 358.0,349.5" fill="url(#f33)" />
<linearGradient id="f34" gradientUnits="userSpaceOnUse" x1="345.0" y1="380.0" x2="445.0" y2="345.0"><stop offset="0" stop-color="#7d5f3f"/><stop offset="0.55" stop-color="#8f7053"/><stop offset="1" stop-color="#9d7d63"/></linearGradient>
<polygon points="358.0,349.5 449.5,320.0 427.5,364.8 321.5,398.3" fill="url(#f34)" />
<linearGradient id="f35" gradientUnits="userSpaceOnUse" x1="400.0" y1="195.0" x2="440.0" y2="150.0"><stop offset="0" stop-color="#907154"/><stop offset="0.5" stop-color="#9e7f65"/><stop offset="1" stop-color="#917256"/></linearGradient>
<polygon points="396.5,169.0 440.3,138.0 440.4,162.0 396.5,213.0" fill="url(#f35)" />
<linearGradient id="f36" gradientUnits="userSpaceOnUse" x1="400.0" y1="210.0" x2="455.0" y2="175.0"><stop offset="0" stop-color="#7d5f3f"/><stop offset="1" stop-color="#88694b"/></linearGradient>
<polygon points="396.5,213.0 440.4,162.0 448.5,178.0 457.1,193.6" fill="url(#f36)" />
<linearGradient id="f37" gradientUnits="userSpaceOnUse" x1="440.0" y1="150.0" x2="591.0" y2="103.0"><stop offset="0" stop-color="#9b7c61"/><stop offset="0.3" stop-color="#a18268"/><stop offset="0.52" stop-color="#927357"/><stop offset="0.66" stop-color="#866749"/><stop offset="0.8" stop-color="#95765b"/><stop offset="0.9" stop-color="#806242"/><stop offset="1" stop-color="#9a7b60"/></linearGradient>
<polygon points="440.3,138.0 591.4,90.8 591.4,115.8 440.4,162.0" fill="url(#f37)" />
<linearGradient id="f38" gradientUnits="userSpaceOnUse" x1="470.0" y1="300.0" x2="560.0" y2="290.0"><stop offset="0" stop-color="#745735"/><stop offset="0.35" stop-color="#846648"/><stop offset="0.7" stop-color="#8a6b4d"/><stop offset="1" stop-color="#98795e"/></linearGradient>
<polygon points="440.4,162.0 448.5,178.0 457.1,193.6 466.0,206.5 472.9,218.2 477.5,237.0 480.7,257.0 486.0,284.0 491.9,311.9 495.5,334.0 498.0,353.4 501.0,408.0 505.2,463.6 510.0,465.8 517.7,467.5 526.0,469.2 535.6,469.8 541.0,468.3 545.0,465.2 545.6,420.0 546.6,356.6 547.7,332.0 550.0,300.0 552.8,271.0 555.0,248.0 557.9,226.6 561.0,214.0 565.0,203.0 573.0,176.0 582.0,147.0 591.4,115.8" fill="url(#f38)" />
<linearGradient id="f39" gradientUnits="userSpaceOnUse" x1="450.0" y1="200.0" x2="590.0" y2="150.0"><stop offset="0" stop-color="#7e6040"/><stop offset="0.55" stop-color="#866749"/><stop offset="0.85" stop-color="#8c6d50"/><stop offset="1" stop-color="#9e7e64"/></linearGradient>
<polygon points="440.4,162.0 482.7,149.1 545.7,129.8 591.4,115.8 582.0,147.0 573.0,176.0 565.0,203.0 557.9,226.6 538.6,232.7 500.0,227.6 472.9,218.2 457.1,193.6" fill="url(#f39)" />
<linearGradient id="f40" gradientUnits="userSpaceOnUse" x1="565.0" y1="170.0" x2="580.0" y2="175.0"><stop offset="0" stop-color="#937458"/><stop offset="1" stop-color="#a28369"/></linearGradient>
<polygon points="577.6,120.0 591.4,115.8 582.0,147.0 573.0,176.0 565.0,203.0 557.9,226.6 557.0,227.0 563.0,205.0 571.0,168.6" fill="url(#f40)" />
<polyline points="220.3,157.8 318.6,132.3" fill="none" stroke="#ffa31a" stroke-width="1.4" />
<polyline points="220.3,157.8 227.4,172.0" fill="none" stroke="#ffa31a" stroke-width="1" />
<polyline points="227.4,172.0 263.5,186.5" fill="none" stroke="#ffa31a" stroke-width="1" />
<polyline points="227.4,172.0 301.2,148.9" fill="none" stroke="#ffa31a" stroke-width="1" />
<polyline points="263.5,186.5 318.6,132.3" fill="none" stroke="#ffa31a" stroke-width="1" />
<polyline points="222.3,161.6 301.2,148.9" fill="none" stroke="#ffa31a" stroke-width="0.8" />
<polyline points="227.4,172.0 226.4,332.3" fill="none" stroke="#ffa31a" stroke-width="1" />
<polyline points="263.5,186.5 264.0,369.8" fill="none" stroke="#ffa31a" stroke-width="1" />
<polyline points="318.6,132.3 320.4,300.0 321.5,398.3" fill="none" stroke="#ffa31a" stroke-width="1" />
<polyline points="220.3,157.8 220.6,240.0 221.0,325.0 226.4,332.3 264.0,369.8 321.5,398.3 427.5,364.8 449.5,320.0" fill="none" stroke="#ffa31a" stroke-width="1" />
<polyline points="321.5,398.3 358.0,349.5" fill="none" stroke="#ffa31a" stroke-width="1" />
<polyline points="358.0,349.5 449.5,320.0" fill="none" stroke="#ffa31a" stroke-width="1" />
<polyline points="358.0,252.0 358.0,349.5" fill="none" stroke="#ffa31a" stroke-width="1" />
<polyline points="358.0,349.5 396.5,213.0" fill="none" stroke="#ffa31a" stroke-width="1" />
<polyline points="318.6,132.3 386.5,64.6 456.3,19.4" fill="none" stroke="#ffa31a" stroke-width="1" />
<polyline points="386.5,64.6 378.0,114.0 366.5,200.0 358.0,252.0" fill="none" stroke="#ffa31a" stroke-width="1" />
<polyline points="456.3,19.4 425.9,94.5 396.5,169.0" fill="none" stroke="#ffa31a" stroke-width="1" />
<polyline points="456.3,19.4 516.3,0.0 566.0,-13.0" fill="none" stroke="#ffa31a" stroke-width="1" />
<polyline points="425.9,94.5 478.7,33.5 566.0,-13.0" fill="none" stroke="#ffa31a" stroke-width="1" />
<polyline points="478.7,33.5 472.0,80.0 465.5,130.2" fill="none" stroke="#ffa31a" stroke-width="1" />
<polyline points="566.0,-13.0 519.3,113.0" fill="none" stroke="#ffa31a" stroke-width="1" />
<polyline points="424.5,97.5 424.5,148.9" fill="none" stroke="#ffa31a" stroke-width="1" />
<polyline points="409.6,139.1 418.4,136.5" fill="none" stroke="#ffa31a" stroke-width="1" />
<polyline points="396.5,169.0 396.5,213.0" fill="none" stroke="#ffa31a" stroke-width="1" />
<polyline points="440.3,138.0 440.3,162.0" fill="none" stroke="#ffa31a" stroke-width="1" />
<polyline points="482.7,124.8 482.7,149.1" fill="none" stroke="#ffa31a" stroke-width="1" />
<polyline points="545.7,105.1 545.7,129.8" fill="none" stroke="#ffa31a" stroke-width="1" />
<polyline points="577.6,95.1 577.6,120.0" fill="none" stroke="#ffa31a" stroke-width="1" />
<polyline points="591.4,90.8 591.4,115.8" fill="none" stroke="#ffa31a" stroke-width="1" />
<polyline points="396.5,213.0 457.1,193.6" fill="none" stroke="#ffa31a" stroke-width="1" />
<polyline points="478.7,253.0 449.5,320.0" fill="none" stroke="#ffa31a" stroke-width="1" />
<polyline points="482.7,149.1 488.0,180.0 494.0,208.0 500.0,227.6 504.0,271.0 510.0,332.0 513.8,359.5 515.5,410.0 517.7,467.5" fill="none" stroke="#ffa31a" stroke-width="1" />
<polyline points="545.7,129.8 540.6,190.0 538.6,232.7 536.6,311.9 534.8,361.0 535.6,469.8" fill="none" stroke="#ffa31a" stroke-width="1" />
<polyline points="577.6,120.0 571.0,168.6 563.0,205.0 557.0,227.0" fill="none" stroke="#ffa31a" stroke-width="1" />
<polyline points="472.9,218.2 486.0,224.0 500.0,227.6 520.0,231.0 538.6,232.7 549.0,230.5 557.9,226.6" fill="none" stroke="#ffa31a" stroke-width="1" />
<polyline points="498.0,353.4 506.0,357.2 513.8,359.5 524.0,360.8 534.8,361.0 541.0,359.5 546.6,356.6" fill="none" stroke="#ffa31a" stroke-width="1" />
<polyline points="544.0,356.5 543.4,467.5" fill="none" stroke="#ffa31a" stroke-width="1" />
<polyline points="510.0,465.8 517.7,467.5 526.0,469.2 535.6,469.8 541.0,468.3 545.0,465.2" fill="none" stroke="#ffa31a" stroke-width="1" />
<polyline points="545.6,420.0 546.6,356.6 547.7,332.0 550.0,300.0 552.8,271.0 555.0,248.0 557.9,226.6 561.0,214.0 565.0,203.0 573.0,176.0 582.0,147.0 591.4,115.8" fill="none" stroke="#ffa31a" stroke-width="1" />
<polyline points="545.0,465.2 545.6,420.0" fill="none" stroke="#ffa31a" stroke-width="1" />
<polyline points="440.4,162.0 396.5,213.0" fill="none" stroke="#ffa31a" stroke-width="1" />
<polyline points="226.4,298.7 264.0,335.3 321.7,347.0 358.0,252.0 378.0,203.0 396.5,169.0 440.3,138.0 591.4,90.8" fill="none" stroke="#ff6a0d" stroke-width="1.6" />
<polyline points="591.4,115.8 440.4,162.0" fill="none" stroke="#ff6a0d" stroke-width="1.6" />
<polyline points="440.4,162.0 448.5,178.0 457.1,193.6 466.0,206.5 472.9,218.2 477.5,237.0 480.7,257.0 486.0,284.0 491.9,311.9 495.5,334.0 498.0,353.4 501.0,408.0 505.2,463.6" fill="none" stroke="#ff6a0d" stroke-width="1.6" />
<polyline points="221.0,214.0 221.2,300.0 221.0,325.0" fill="none" stroke="#ff6a0d" stroke-width="1.6" stroke-dasharray="7 3"/>
<polyline points="220.3,157.8 318.6,132.3 386.5,64.6 456.3,19.4" fill="none" stroke="#ffb028" stroke-width="1.4" />
<polyline points="456.3,19.4 516.3,0.0 566.0,-13.0 519.3,113.0" fill="none" stroke="#ffb028" stroke-width="1.2" />
<polyline points="591.4,115.8 591.4,115.8 582.0,147.0 573.0,176.0 565.0,203.0 561.0,214.0 557.9,226.6 555.0,248.0 552.8,271.0 550.0,300.0 547.7,332.0 546.6,356.6 545.6,420.0 545.0,465.2 541.0,468.3 535.6,469.8 526.0,469.2 517.7,467.5 510.0,465.8" fill="none" stroke="#ffb028" stroke-width="1.2" />
<polyline points="226.4,332.3 264.0,369.8 321.5,398.3 427.5,364.8 449.5,320.0 478.7,253.0" fill="none" stroke="#ffb028" stroke-width="1.4" />
<circle shape-rendering="geometricPrecision" cx="298.5" cy="268.3" r="2.6" fill="#f0a050" stroke="#222" stroke-width="0.8"/>
<polygon points="574.0,284.5 536.6,317.0 612.0,325.0" fill="#f5640a" />
<polyline points="521.5,321.0 517.5,375.0" fill="none" stroke="#ee7f3c" stroke-width="1" />
<polyline points="521.5,321.0 612.0,329.0" fill="none" stroke="#ee7f3c" stroke-width="1" />
<polyline points="517.5,375.0 612.0,382.0" fill="none" stroke="#ee7f3c" stroke-width="1" />
<polyline points="521.5,321.0 551.7,358.6 612.0,389.0" fill="none" stroke="#ee7f3c" stroke-width="1" />
<polyline points="517.5,375.0 551.7,358.6 612.0,333.5" fill="none" stroke="#ee7f3c" stroke-width="1" />
<circle shape-rendering="geometricPrecision" cx="551.7" cy="358.6" r="2.6" fill="#f08a30" stroke="#222" stroke-width="0.8"/>
<circle shape-rendering="geometricPrecision" cx="576.4" cy="220.5" r="9.6" fill="none" stroke="#ffffff" stroke-width="1.2"/>
<circle shape-rendering="geometricPrecision" cx="576.4" cy="220.5" r="9.6" fill="none" stroke="#e01010" stroke-width="1.2" stroke-dasharray="3.8 3.8"/>
<line x1="580.9" y1="220.5" x2="595.4" y2="220.5" stroke="#000" stroke-width="1" />
<line x1="571.9" y1="220.5" x2="557.4" y2="220.5" stroke="#000" stroke-width="1" />
<line x1="576.4" y1="225.0" x2="576.4" y2="239.5" stroke="#000" stroke-width="1" />
<line x1="576.4" y1="216.0" x2="576.4" y2="201.5" stroke="#000" stroke-width="1" />
<circle shape-rendering="geometricPrecision" cx="423.4" cy="232.0" r="15" fill="none" stroke="#fff" stroke-width="1.2"/>
<line x1="423.4" y1="217.0" x2="423.4" y2="176.0" stroke="#1c1cf0" stroke-width="1.4" />
<polygon points="423.4,159.5 418.8,176.5 428.0,176.5" fill="#1010ff" shape-rendering="geometricPrecision"/>
<line x1="437.0" y1="227.0" x2="476.0" y2="213.5" stroke="#20d020" stroke-width="1.4" />
<polygon points="494.0,208.3 474.6,209.8 477.0,218.0" fill="#18e018" shape-rendering="geometricPrecision"/>
<line x1="430.7" y1="238.4" x2="458.5" y2="258.8" stroke="#e01818" stroke-width="1.4" />
<polygon points="468.6,266.6 461.2,256.2 456.8,261.8" fill="#f01010" shape-rendering="geometricPrecision"/>
</g></g>
</g>
<line x1="9.5" y1="490.0" x2="9.5" y2="1006.0" stroke="#3a3a3a" stroke-width="1" />
<rect x="608.0" y="0.0" width="31.0" height="29.0" fill="#7b7b7b" />
<rect x="621.0" y="0.0" width="12.5" height="29.0" fill="url(#gtrack)" />
<line x1="621.0" y1="0.0" x2="621.0" y2="29.0" stroke="#555" stroke-width="0.8" />
<line x1="633.6" y1="0.0" x2="633.6" y2="29.0" stroke="#555" stroke-width="0.8" />
<rect x="638.0" y="0.0" width="465.5" height="28.5" fill="#363636" />
<line x1="638.5" y1="0.0" x2="638.5" y2="28.5" stroke="#000" stroke-width="1" />
<rect x="1103.5" y="0.0" width="6.5" height="537.5" fill="#787878" />
<g clip-path="url(#clipBp)">
<g transform="translate(508,-114.3)">
<use href="#pu"/>
</g>
<rect x="604.0" y="360.5" width="73.0" height="126.0" fill="#727272" />
<rect x="660.6" y="20.0" width="11.5" height="335.5" rx="5.5" fill="url(#gtrack)" stroke="#525252" stroke-width="0.8"/>
<rect x="660.6" y="69.0" width="11.5" height="269.0" rx="5.5" fill="url(#gthumb)" stroke="#545454" stroke-width="0.8"/>
<line x1="672.7" y1="29.0" x2="672.7" y2="360.0" stroke="#5e5e5e" stroke-width="0.8" />
<g transform="translate(508,-42)">
<use href="#pl"/>
</g>
<line x1="676.6" y1="29.0" x2="676.6" y2="486.0" stroke="#4a4a4a" stroke-width="1" />
</g>
<g clip-path="url(#clipBv)">
<rect x="677.0" y="28.0" width="427.0" height="458.0" fill="#c1c1c1" />
<line x1="677.0" y1="-1.0" x2="1104.0" y2="-105.8" stroke="#5c5c5c" stroke-width="0.9" />
<line x1="677.0" y1="64.7" x2="1104.0" y2="-40.1" stroke="#5c5c5c" stroke-width="0.9" />
<line x1="677.0" y1="130.7" x2="1104.0" y2="25.9" stroke="#5c5c5c" stroke-width="0.9" />
<line x1="677.0" y1="194.7" x2="1104.0" y2="89.9" stroke="#5c5c5c" stroke-width="0.9" />
<line x1="677.0" y1="326.0" x2="1104.0" y2="221.2" stroke="#5c5c5c" stroke-width="0.9" />
<line x1="677.0" y1="392.0" x2="1104.0" y2="287.2" stroke="#5c5c5c" stroke-width="0.9" />
<line x1="677.0" y1="457.0" x2="1104.0" y2="352.2" stroke="#5c5c5c" stroke-width="0.9" />
<line x1="677.0" y1="522.0" x2="1104.0" y2="417.2" stroke="#5c5c5c" stroke-width="0.9" />
<line x1="677.0" y1="587.0" x2="1104.0" y2="482.2" stroke="#5c5c5c" stroke-width="0.9" />
<line x1="677.0" y1="261.8" x2="1104.0" y2="155.7" stroke="#8e2626" stroke-width="1" />
<line x1="677.0" y1="448.0" x2="1104.0" y2="875.0" stroke="#5c5c5c" stroke-width="0.9" />
<line x1="677.0" y1="190.0" x2="1104.0" y2="604.2" stroke="#5c5c5c" stroke-width="0.9" />
<line x1="677.0" y1="55.5" x2="1104.0" y2="478.2" stroke="#5c5c5c" stroke-width="0.9" />
<line x1="677.0" y1="-77.7" x2="1104.0" y2="349.3" stroke="#5c5c5c" stroke-width="0.9" />
<line x1="677.0" y1="-212.0" x2="1104.0" y2="223.5" stroke="#5c5c5c" stroke-width="0.9" />
<line x1="677.0" y1="-345.0" x2="1104.0" y2="94.8" stroke="#5c5c5c" stroke-width="0.9" />
<line x1="677.0" y1="317.7" x2="1104.0" y2="738.3" stroke="#3f7f3f" stroke-width="0.9" />
<polygon points="677.0,147.0 727.9,131.7 819.3,43.4 828.4,29.0 1051.8,29.0 1000.0,114.5 979.7,182.5 969.5,210.0 931.0,329.8 910.7,380.0 891.4,425.7 825.4,450.5 746.2,462.3 677.0,444.6" fill="#000" fill-opacity="0.065"/>
<polygon points="677.0,147.0 727.9,131.7 727.9,352.0 746.2,462.3 677.0,444.6" fill="#000" fill-opacity="0.04"/>
<polygon points="727.9,131.7 822.3,226.0 825.4,450.5 746.2,462.3 727.9,352.0" fill="#000" fill-opacity="0.06"/>
<polygon points="677.0,292.3 746.8,268.0 823.4,230.3 825.4,297.3 891.4,364.4 891.4,425.7 825.4,450.5 746.2,462.3 677.0,444.6" fill="#000" fill-opacity="0.035"/>
<polygon points="886.6,111.0 927.6,44.4 936.9,29.0 1051.8,29.0 1000.0,114.5 979.7,182.5 964.5,228.0 931.0,329.8 910.7,380.0 891.4,425.7 891.4,364.4 873.0,271.0 873.6,155.2" fill="#000" fill-opacity="0.115"/>
<polygon points="927.6,44.4 927.6,29.0 1026.0,29.0 1000.0,62.7 1000.0,114.5" fill="#000" fill-opacity="0.06"/>
<polygon points="873.6,155.2 931.6,213.1 923.0,245.0 909.7,291.0 891.4,364.4 825.4,297.3 848.8,225.0" fill="#000" fill-opacity="0.06"/>
<polygon points="825.4,297.3 891.4,364.4 891.4,425.7 825.4,359.3" fill="url(#dotsb)" />
<polygon points="1018.3,29.0 1032.5,109.4 1042.7,176.4 1044.7,210.0 1051.8,303.4 1072.0,325.8 1085.3,317.7 1094.5,307.5 1093.4,210.0 1093.4,178.4 1104.0,58.6 1104.0,29.0" fill="#000" fill-opacity="0.10"/>
<polygon points="1052.8,29.0 1061.0,171.3 1063.0,210.0 1072.0,303.4 1085.3,317.7 1083.3,210.0 1082.0,172.0 1088.0,29.0" fill="#000" fill-opacity="0.07"/>
<polygon points="1018.3,29.0 1065.0,29.0 1060.0,53.5 1026.0,75.0" fill="#000" fill-opacity="0.10"/>
<polyline points="677.0,147.0 727.9,131.7 819.3,43.4 828.4,29.0" fill="none" stroke="#000" stroke-width="1.1" />
<polyline points="727.9,131.7 727.9,352.0" fill="none" stroke="#000" stroke-width="1.1" />
<polyline points="727.9,131.7 822.3,226.0" fill="none" stroke="#000" stroke-width="1.1" />
<polyline points="819.3,43.4 822.3,226.0 823.4,230.3 825.4,297.3 825.4,450.5" fill="none" stroke="#000" stroke-width="1.1" />
<polyline points="677.0,197.7 746.8,268.0 746.2,462.3" fill="none" stroke="#000" stroke-width="1.1" />
<polyline points="677.0,292.3 746.8,268.0 823.4,230.3" fill="none" stroke="#000" stroke-width="1.1" />
<polyline points="728.0,352.0 825.4,450.5" fill="none" stroke="#000" stroke-width="1.1" />
<polyline points="677.0,392.0 746.2,462.3" fill="none" stroke="#000" stroke-width="1.1" />
<polyline points="677.0,353.0 728.0,353.0 825.4,359.3" fill="none" stroke="#000" stroke-width="1.1" />
<polyline points="677.0,444.6 746.2,462.3 825.4,450.5 891.4,425.7 910.7,380.0 931.0,329.8 969.5,210.0 979.7,182.5 1000.0,114.5 1051.8,29.0" fill="none" stroke="#000" stroke-width="1.1" />
<polyline points="899.7,29.0 879.0,130.0 873.6,155.2 873.3,271.0" fill="none" stroke="#000" stroke-width="1.1" />
<polyline points="936.9,29.0 927.6,44.4 886.6,111.0 876.9,130.0 824.4,230.6" fill="none" stroke="#000" stroke-width="1.1" />
<polyline points="927.6,29.0 927.6,44.4" fill="none" stroke="#000" stroke-width="1.1" />
<polyline points="886.6,111.0 888.4,246.6 890.4,301.4 891.4,364.4" fill="none" stroke="#000" stroke-width="1.1" />
<polyline points="927.6,44.4 920.8,81.0 906.4,130.0 895.5,177.0 880.2,242.0 873.0,271.0" fill="none" stroke="#000" stroke-width="1.1" />
<polyline points="927.6,44.4 1000.0,114.5" fill="none" stroke="#000" stroke-width="1.1" />
<polyline points="929.2,43.2 1001.0,112.5" fill="none" stroke="#000" stroke-width="1.1" />
<polyline points="873.6,155.2 931.6,213.1" fill="none" stroke="#000" stroke-width="1.1" />
<polyline points="970.5,32.0 950.2,130.0 937.6,184.7 931.6,213.1 931.0,329.8" fill="none" stroke="#000" stroke-width="1.1" />
<polyline points="965.5,29.0 1000.0,62.7 1000.0,114.5" fill="none" stroke="#000" stroke-width="1.1" />
<polyline points="1015.0,29.0 1000.0,62.7" fill="none" stroke="#000" stroke-width="1.1" />
<polyline points="873.0,271.0 825.4,359.3" fill="none" stroke="#000" stroke-width="1.1" />
<polyline points="873.0,271.0 931.0,327.8" fill="none" stroke="#000" stroke-width="1.1" />
<polyline points="874.5,269.5 932.0,326.0" fill="none" stroke="#000" stroke-width="1.1" />
<polyline points="888.3,210.0 870.0,260.8" fill="none" stroke="#000" stroke-width="1.1" />
<polyline points="1018.3,29.0 1032.5,109.4 1042.7,176.4 1044.7,210.0 1051.8,303.4 1072.0,325.8 1085.3,317.7 1094.5,307.5 1093.4,210.0 1093.4,178.4 1103.6,58.6" fill="none" stroke="#000" stroke-width="1.1" />
<polyline points="1051.8,29.0 1060.0,53.5 1087.3,39.3 1095.5,29.0" fill="none" stroke="#000" stroke-width="1.1" />
<polyline points="1052.8,29.0 1061.0,171.3 1063.0,210.0 1071.0,300.4" fill="none" stroke="#000" stroke-width="1.1" />
<polyline points="1088.0,29.0 1082.0,172.0 1083.3,210.0 1085.3,317.7" fill="none" stroke="#000" stroke-width="1.1" />
<polyline points="1094.5,29.0 1092.4,101.0 1086.0,174.0 1087.3,210.0 1090.4,303.4" fill="none" stroke="#000" stroke-width="1.1" />
<polyline points="1042.7,175.4 1061.0,171.3 1082.3,172.3 1087.3,174.4 1093.4,180.5 1085.3,190.6 1066.0,199.8 1042.7,176.4" fill="none" stroke="#000" stroke-width="1.1" />
<polyline points="1051.8,303.4 1071.0,300.4 1090.4,302.4 1094.5,307.5" fill="none" stroke="#000" stroke-width="1.1" />
<polyline points="1071.0,300.4 1072.0,325.8" fill="none" stroke="#000" stroke-width="1.1" />
<polyline points="914.5,29.0 886.6,110.0 873.6,155.2 843.0,242.0 825.4,297.3 727.9,310.0 677.0,310.5" fill="none" stroke="#1a0000" stroke-width="1.8" />
<polyline points="914.5,29.0 886.6,110.0 873.6,155.2 843.0,242.0 825.4,297.3 727.9,310.0 677.0,310.5" fill="none" stroke="#e03020" stroke-width="0.8" />
<polyline points="1026.4,29.0 1000.0,62.7 971.6,125.6 960.0,150.8 940.3,195.6 931.6,213.1 923.9,242.0 909.7,291.0 891.4,364.4 853.8,389.8 825.4,408.8 746.2,420.0 677.0,410.5" fill="none" stroke="#1a0000" stroke-width="1.8" />
<polyline points="1026.4,29.0 1000.0,62.7 971.6,125.6 960.0,150.8 940.3,195.6 931.6,213.1 923.9,242.0 909.7,291.0 891.4,364.4 853.8,389.8 825.4,408.8 746.2,420.0 677.0,410.5" fill="none" stroke="#e03020" stroke-width="0.8" />
<polyline points="1065.0,29.0 1060.0,53.5 1062.0,121.6 1066.0,198.8 1068.0,228.0 1072.0,325.8" fill="none" stroke="#1a0000" stroke-width="1.8" />
<polyline points="1065.0,29.0 1060.0,53.5 1062.0,121.6 1066.0,198.8 1068.0,228.0 1072.0,325.8" fill="none" stroke="#e03020" stroke-width="0.8" />
<polyline points="1051.8,303.4 1072.0,325.8" fill="none" stroke="#c02010" stroke-width="1" />
<polyline points="825.4,297.3 891.4,364.4 891.4,425.7 825.4,359.3 825.4,297.3" fill="none" stroke="#ffa62a" stroke-width="1.3" />
<polyline points="825.4,297.3 891.4,364.4" fill="none" stroke="#e08a30" stroke-width="1" />
<rect x="860.0" y="93.8" width="4.0" height="4.0" fill="#000" />
<rect x="897.5" y="112.9" width="4.0" height="4.0" fill="#000" />
<rect x="923.0" y="156.7" width="4.0" height="4.0" fill="#000" />
<rect x="733.0" y="194.7" width="4.0" height="4.0" fill="#000" />
<rect x="772.6" y="193.9" width="4.0" height="4.0" fill="#000" />
<rect x="680.6" y="225.5" width="4.0" height="4.0" fill="#000" />
<rect x="1034.0" y="34.9" width="4.0" height="4.0" fill="#000" />
<rect x="1039.6" y="87.0" width="4.0" height="4.0" fill="#000" />
<rect x="1072.0" y="86.0" width="4.0" height="4.0" fill="#000" />
<rect x="1093.9" y="92.0" width="4.0" height="4.0" fill="#000" />
<rect x="1090.8" y="105.0" width="4.0" height="4.0" fill="#000" />
<rect x="1043.7" y="107.8" width="4.0" height="4.0" fill="#000" />
<rect x="1072.0" y="119.6" width="4.0" height="4.0" fill="#000" />
<rect x="931.0" y="104.0" width="4.0" height="4.0" fill="#000" />
<rect x="931.0" y="188.0" width="4.0" height="4.0" fill="#000" />
<rect x="963.9" y="177.9" width="4.0" height="4.0" fill="#000" />
<rect x="931.0" y="187.6" width="4.0" height="4.0" fill="#000" />
<rect x="846.8" y="268.5" width="4.0" height="4.0" fill="#000" />
<rect x="854.9" y="275.6" width="4.0" height="4.0" fill="#000" />
<rect x="877.8" y="256.0" width="4.0" height="4.0" fill="#000" />
<rect x="773.6" y="327.8" width="4.0" height="4.0" fill="#000" />
<rect x="783.8" y="329.9" width="4.0" height="4.0" fill="#000" />
<rect x="680.8" y="329.9" width="4.0" height="4.0" fill="#000" />
<rect x="677.0" y="348.8" width="4.0" height="4.0" fill="#000" />
<rect x="708.6" y="359.7" width="4.0" height="4.0" fill="#000" />
<rect x="877.8" y="343.7" width="4.0" height="4.0" fill="#000" />
<rect x="909.7" y="330.5" width="4.0" height="4.0" fill="#000" />
<rect x="814.7" y="394.7" width="4.0" height="4.0" fill="#000" />
<rect x="732.8" y="403.0" width="4.0" height="4.0" fill="#000" />
<rect x="856.9" y="410.8" width="4.0" height="4.0" fill="#000" />
<rect x="677.0" y="426.0" width="4.0" height="4.0" fill="#000" />
<rect x="783.8" y="433.9" width="4.0" height="4.0" fill="#000" />
<rect x="1053.9" y="236.8" width="4.0" height="4.0" fill="#000" />
<rect x="1074.8" y="234.8" width="4.0" height="4.0" fill="#000" />
<rect x="1088.8" y="238.9" width="4.0" height="4.0" fill="#000" />
<rect x="1087.0" y="248.0" width="4.0" height="4.0" fill="#000" />
<rect x="1056.9" y="250.0" width="4.0" height="4.0" fill="#000" />
<rect x="1074.8" y="256.8" width="4.0" height="4.0" fill="#000" />
<rect x="1068.0" y="310.6" width="4.0" height="4.0" fill="#000" />
<rect x="1082.9" y="306.0" width="4.0" height="4.0" fill="#000" />
<line x1="857.9" y1="361.3" x2="827.0" y2="331.5" stroke="#20c820" stroke-width="1.3" />
<ellipse cx="826.8" cy="331.2" rx="5.4" ry="3.8" transform="rotate(40 826.8 331.2)" fill="#18d818"/>
<circle cx="857.9" cy="361.3" r="15" fill="none" stroke="#fff" stroke-width="1.3"/>
<circle cx="857.9" cy="361.3" r="2.4" fill="#ff8a10"/>
<line x1="857.9" y1="346.3" x2="857.9" y2="304.0" stroke="#1c1cf0" stroke-width="1.5" />
<polygon points="857.9,289.0 853.8,304.0 862.0,304.0" fill="#1010f0" />
<line x1="872.0" y1="358.0" x2="916.0" y2="347.8" stroke="#e01818" stroke-width="1.3" />
<polygon points="930.5,343.0 915.5,344.0 917.5,351.5" fill="#f01010" />
</g>
<text x="915.5" y="394" fill="#dd7a55" fill-opacity="0.78" font-family="'Liberation Serif','DejaVu Serif',serif" font-style="italic" font-size="22.5" textLength="199" lengthAdjust="spacingAndGlyphs">La cara que te sobra</text>
<clipPath id="clipDs"><rect x="608" y="486" width="496" height="520"/></clipPath>
<g clip-path="url(#clipDs)">
<rect x="608.0" y="486.0" width="31.0" height="520.0" fill="url(#gstrip)" />
<rect x="608.0" y="486.0" width="13.0" height="520.0" fill="#7c7c7c" />
<rect x="621.3" y="486" width="12.2" height="270" fill="url(#gtrack)"/>
<rect x="621.3" y="486" width="12.2" height="4" fill="#9a9a9a"/>
<rect x="621.3" y="750" width="12.2" height="262" rx="5.5" fill="url(#gthumb2)"/>
<rect x="612.0" y="706.5" width="4.2" height="1.4" fill="#3a3a3a" />
<line x1="609.0" y1="713.0" x2="616.0" y2="718.0" stroke="#6a6a6a" stroke-width="0.9" />
<line x1="616.0" y1="713.0" x2="609.0" y2="718.0" stroke="#868686" stroke-width="0.9" />
<line x1="609.0" y1="716.5" x2="616.0" y2="721.5" stroke="#6a6a6a" stroke-width="0.9" />
<line x1="616.0" y1="716.5" x2="609.0" y2="721.5" stroke="#868686" stroke-width="0.9" />
<line x1="609.0" y1="720.0" x2="616.0" y2="725.0" stroke="#6a6a6a" stroke-width="0.9" />
<line x1="616.0" y1="720.0" x2="609.0" y2="725.0" stroke="#868686" stroke-width="0.9" />
<line x1="609.0" y1="723.5" x2="616.0" y2="728.5" stroke="#6a6a6a" stroke-width="0.9" />
<line x1="616.0" y1="723.5" x2="609.0" y2="728.5" stroke="#868686" stroke-width="0.9" />
<line x1="621.0" y1="486.0" x2="621.0" y2="1006.0" stroke="#505050" stroke-width="0.9" />
<line x1="633.8" y1="486.0" x2="633.8" y2="1006.0" stroke="#505050" stroke-width="0.9" />
<rect x="634.3" y="486.0" width="4.0" height="520.0" fill="#7d7d7d" />
<rect x="638.0" y="486.0" width="465.5" height="520.0" fill="#363636" />
<line x1="638.5" y1="486.0" x2="638.5" y2="1006.0" stroke="#000" stroke-width="1.2" />
<line x1="1102.8" y1="486.0" x2="1102.8" y2="1006.0" stroke="#000" stroke-width="1.4" />
</g>
<g clip-path="url(#clipD)">
<rect x="671.0" y="545.0" width="399.4" height="399.7" fill="#4b4b4b" />
<line x1="683.5" y1="545.0" x2="683.5" y2="944.4" stroke="#434343" stroke-width="0.8" />
<line x1="671.0" y1="557.5" x2="1070.4" y2="557.5" stroke="#434343" stroke-width="0.8" />
<line x1="696.0" y1="545.0" x2="696.0" y2="944.4" stroke="#434343" stroke-width="0.8" />
<line x1="671.0" y1="570.0" x2="1070.4" y2="570.0" stroke="#434343" stroke-width="0.8" />
<line x1="708.4" y1="545.0" x2="708.4" y2="944.4" stroke="#434343" stroke-width="0.8" />
<line x1="671.0" y1="582.4" x2="1070.4" y2="582.4" stroke="#434343" stroke-width="0.8" />
<line x1="720.9" y1="545.0" x2="720.9" y2="944.4" stroke="#3c3c3c" stroke-width="1.0" />
<line x1="671.0" y1="594.9" x2="1070.4" y2="594.9" stroke="#3c3c3c" stroke-width="1.0" />
<line x1="733.4" y1="545.0" x2="733.4" y2="944.4" stroke="#434343" stroke-width="0.8" />
<line x1="671.0" y1="607.4" x2="1070.4" y2="607.4" stroke="#434343" stroke-width="0.8" />
<line x1="745.9" y1="545.0" x2="745.9" y2="944.4" stroke="#434343" stroke-width="0.8" />
<line x1="671.0" y1="619.9" x2="1070.4" y2="619.9" stroke="#434343" stroke-width="0.8" />
<line x1="758.4" y1="545.0" x2="758.4" y2="944.4" stroke="#434343" stroke-width="0.8" />
<line x1="671.0" y1="632.4" x2="1070.4" y2="632.4" stroke="#434343" stroke-width="0.8" />
<line x1="770.9" y1="545.0" x2="770.9" y2="944.4" stroke="#3c3c3c" stroke-width="1.0" />
<line x1="671.0" y1="644.9" x2="1070.4" y2="644.9" stroke="#3c3c3c" stroke-width="1.0" />
<line x1="783.3" y1="545.0" x2="783.3" y2="944.4" stroke="#434343" stroke-width="0.8" />
<line x1="671.0" y1="657.3" x2="1070.4" y2="657.3" stroke="#434343" stroke-width="0.8" />
<line x1="795.8" y1="545.0" x2="795.8" y2="944.4" stroke="#434343" stroke-width="0.8" />
<line x1="671.0" y1="669.8" x2="1070.4" y2="669.8" stroke="#434343" stroke-width="0.8" />
<line x1="808.3" y1="545.0" x2="808.3" y2="944.4" stroke="#434343" stroke-width="0.8" />
<line x1="671.0" y1="682.3" x2="1070.4" y2="682.3" stroke="#434343" stroke-width="0.8" />
<line x1="820.8" y1="545.0" x2="820.8" y2="944.4" stroke="#3c3c3c" stroke-width="1.0" />
<line x1="671.0" y1="694.8" x2="1070.4" y2="694.8" stroke="#3c3c3c" stroke-width="1.0" />
<line x1="833.3" y1="545.0" x2="833.3" y2="944.4" stroke="#434343" stroke-width="0.8" />
<line x1="671.0" y1="707.3" x2="1070.4" y2="707.3" stroke="#434343" stroke-width="0.8" />
<line x1="845.7" y1="545.0" x2="845.7" y2="944.4" stroke="#434343" stroke-width="0.8" />
<line x1="671.0" y1="719.7" x2="1070.4" y2="719.7" stroke="#434343" stroke-width="0.8" />
<line x1="858.2" y1="545.0" x2="858.2" y2="944.4" stroke="#434343" stroke-width="0.8" />
<line x1="671.0" y1="732.2" x2="1070.4" y2="732.2" stroke="#434343" stroke-width="0.8" />
<line x1="870.7" y1="545.0" x2="870.7" y2="944.4" stroke="#3c3c3c" stroke-width="1.0" />
<line x1="671.0" y1="744.7" x2="1070.4" y2="744.7" stroke="#3c3c3c" stroke-width="1.0" />
<line x1="883.2" y1="545.0" x2="883.2" y2="944.4" stroke="#434343" stroke-width="0.8" />
<line x1="671.0" y1="757.2" x2="1070.4" y2="757.2" stroke="#434343" stroke-width="0.8" />
<line x1="895.7" y1="545.0" x2="895.7" y2="944.4" stroke="#434343" stroke-width="0.8" />
<line x1="671.0" y1="769.7" x2="1070.4" y2="769.7" stroke="#434343" stroke-width="0.8" />
<line x1="908.1" y1="545.0" x2="908.1" y2="944.4" stroke="#434343" stroke-width="0.8" />
<line x1="671.0" y1="782.1" x2="1070.4" y2="782.1" stroke="#434343" stroke-width="0.8" />
<line x1="920.6" y1="545.0" x2="920.6" y2="944.4" stroke="#3c3c3c" stroke-width="1.0" />
<line x1="671.0" y1="794.6" x2="1070.4" y2="794.6" stroke="#3c3c3c" stroke-width="1.0" />
<line x1="933.1" y1="545.0" x2="933.1" y2="944.4" stroke="#434343" stroke-width="0.8" />
<line x1="671.0" y1="807.1" x2="1070.4" y2="807.1" stroke="#434343" stroke-width="0.8" />
<line x1="945.6" y1="545.0" x2="945.6" y2="944.4" stroke="#434343" stroke-width="0.8" />
<line x1="671.0" y1="819.6" x2="1070.4" y2="819.6" stroke="#434343" stroke-width="0.8" />
<line x1="958.1" y1="545.0" x2="958.1" y2="944.4" stroke="#434343" stroke-width="0.8" />
<line x1="671.0" y1="832.1" x2="1070.4" y2="832.1" stroke="#434343" stroke-width="0.8" />
<line x1="970.5" y1="545.0" x2="970.5" y2="944.4" stroke="#3c3c3c" stroke-width="1.0" />
<line x1="671.0" y1="844.5" x2="1070.4" y2="844.5" stroke="#3c3c3c" stroke-width="1.0" />
<line x1="983.0" y1="545.0" x2="983.0" y2="944.4" stroke="#434343" stroke-width="0.8" />
<line x1="671.0" y1="857.0" x2="1070.4" y2="857.0" stroke="#434343" stroke-width="0.8" />
<line x1="995.5" y1="545.0" x2="995.5" y2="944.4" stroke="#434343" stroke-width="0.8" />
<line x1="671.0" y1="869.5" x2="1070.4" y2="869.5" stroke="#434343" stroke-width="0.8" />
<line x1="1008.0" y1="545.0" x2="1008.0" y2="944.4" stroke="#434343" stroke-width="0.8" />
<line x1="671.0" y1="882.0" x2="1070.4" y2="882.0" stroke="#434343" stroke-width="0.8" />
<line x1="1020.5" y1="545.0" x2="1020.5" y2="944.4" stroke="#3c3c3c" stroke-width="1.0" />
<line x1="671.0" y1="894.5" x2="1070.4" y2="894.5" stroke="#3c3c3c" stroke-width="1.0" />
<line x1="1033.0" y1="545.0" x2="1033.0" y2="944.4" stroke="#434343" stroke-width="0.8" />
<line x1="671.0" y1="907.0" x2="1070.4" y2="907.0" stroke="#434343" stroke-width="0.8" />
<line x1="1045.4" y1="545.0" x2="1045.4" y2="944.4" stroke="#434343" stroke-width="0.8" />
<line x1="671.0" y1="919.4" x2="1070.4" y2="919.4" stroke="#434343" stroke-width="0.8" />
<line x1="1057.9" y1="545.0" x2="1057.9" y2="944.4" stroke="#434343" stroke-width="0.8" />
<line x1="671.0" y1="931.9" x2="1070.4" y2="931.9" stroke="#434343" stroke-width="0.8" />
<path d="M670.2 616.3 L683.4 600.4 L701.4 584.4 L714.7 582.5 L736.6 590.3 L752.2 601.4 L801.4 624.0 L779.0 643.6 L758.2 693.4 L751.4 739.0 L746.5 739.0 L737.5 737.3 L714.7 739.0 L704.5 693.4 L685.4 640.0 Z " fill="#866741" fill-rule="evenodd"/>
<path d="M670.2 616.3 L683.4 600.4 M683.4 600.4 L701.4 584.4 M701.4 584.4 L714.7 582.5 M714.7 582.5 L736.6 590.3 M736.6 590.3 L752.2 601.4 M752.2 601.4 L801.4 624.0 M685.4 640.0 L697.0 636.2 M697.0 636.2 L712.3 632.7 M712.3 632.7 L720.5 631.3 M720.5 631.3 L736.6 630.3 M736.6 630.3 L748.5 630.3 M748.5 630.3 L779.0 643.6 M704.5 693.4 L711.4 692.2 M711.4 692.2 L719.2 691.3 M719.2 691.3 L726.4 690.3 M726.4 690.3 L734.2 690.3 M734.2 690.3 L741.4 690.3 M741.4 690.3 L758.2 693.4 M714.7 739.0 L719.6 733.2 M719.6 733.2 L725.4 728.0 M725.4 728.0 L727.4 727.4 M727.4 727.4 L731.3 731.5 M731.3 731.5 L737.5 737.3 M737.5 737.3 L746.5 739.0 M746.5 739.0 L751.4 739.0 M670.2 616.3 L685.4 640.0 M683.4 600.4 L697.0 636.2 M701.4 584.4 L712.3 632.7 M714.7 582.5 L720.5 631.3 M736.6 590.3 L736.6 630.3 M752.2 601.4 L748.5 630.3 M801.4 624.0 L779.0 643.6 M685.4 640.0 L704.5 693.4 M697.0 636.2 L711.4 692.2 M712.3 632.7 L719.2 691.3 M720.5 631.3 L726.4 690.3 M736.6 630.3 L734.2 690.3 M748.5 630.3 L741.4 690.3 M779.0 643.6 L758.2 693.4 M704.5 693.4 L714.7 739.0 M711.4 692.2 L719.6 733.2 M719.2 691.3 L725.4 728.0 M726.4 690.3 L727.4 727.4 M734.2 690.3 L731.3 731.5 M741.4 690.3 L737.5 737.3 M758.2 693.4 L751.4 739.0 M714.7 739.0 L737.5 737.3 " fill="none" stroke="#200900" stroke-width="3" stroke-linecap="square" shape-rendering="crispEdges"/>
<path d="M670.2 616.3 L683.4 600.4 M683.4 600.4 L701.4 584.4 M701.4 584.4 L714.7 582.5 M714.7 582.5 L736.6 590.3 M736.6 590.3 L752.2 601.4 M752.2 601.4 L801.4 624.0 M685.4 640.0 L697.0 636.2 M697.0 636.2 L712.3 632.7 M712.3 632.7 L720.5 631.3 M720.5 631.3 L736.6 630.3 M736.6 630.3 L748.5 630.3 M748.5 630.3 L779.0 643.6 M704.5 693.4 L711.4 692.2 M711.4 692.2 L719.2 691.3 M719.2 691.3 L726.4 690.3 M726.4 690.3 L734.2 690.3 M734.2 690.3 L741.4 690.3 M741.4 690.3 L758.2 693.4 M714.7 739.0 L719.6 733.2 M719.6 733.2 L725.4 728.0 M725.4 728.0 L727.4 727.4 M727.4 727.4 L731.3 731.5 M731.3 731.5 L737.5 737.3 M737.5 737.3 L746.5 739.0 M746.5 739.0 L751.4 739.0 M670.2 616.3 L685.4 640.0 M683.4 600.4 L697.0 636.2 M701.4 584.4 L712.3 632.7 M714.7 582.5 L720.5 631.3 M736.6 590.3 L736.6 630.3 M752.2 601.4 L748.5 630.3 M801.4 624.0 L779.0 643.6 M685.4 640.0 L704.5 693.4 M697.0 636.2 L711.4 692.2 M712.3 632.7 L719.2 691.3 M720.5 631.3 L726.4 690.3 M736.6 630.3 L734.2 690.3 M748.5 630.3 L741.4 690.3 M779.0 643.6 L758.2 693.4 M704.5 693.4 L714.7 739.0 M711.4 692.2 L719.6 733.2 M719.2 691.3 L725.4 728.0 M726.4 690.3 L727.4 727.4 M734.2 690.3 L731.3 731.5 M741.4 690.3 L737.5 737.3 M758.2 693.4 L751.4 739.0 M714.7 739.0 L737.5 737.3 " fill="none" stroke="#ffb452" stroke-width="1" shape-rendering="crispEdges"/>
<path d="M815.3 632.2 L829.4 627.2 L876.7 627.2 L904.5 638.4 L933.4 651.4 L919.7 671.3 L893.1 715.0 L885.3 739.5 L854.4 723.3 L827.2 706.4 L804.4 667.3 L801.3 651.4 Z " fill="#866741" fill-rule="evenodd"/>
<path d="M815.3 632.2 L829.4 627.2 M829.4 627.2 L876.7 627.2 M876.7 627.2 L904.5 638.4 M904.5 638.4 L933.4 651.4 M933.4 651.4 L919.7 671.3 M919.7 671.3 L893.1 715.0 M893.1 715.0 L885.3 739.5 M885.3 739.5 L854.4 723.3 M854.4 723.3 L827.2 706.4 M827.2 706.4 L804.4 667.3 M804.4 667.3 L801.3 651.4 M801.3 651.4 L815.3 632.2 M829.4 627.2 L832.5 637.2 M815.3 632.2 L820.5 638.4 M820.5 638.4 L832.5 637.2 M832.5 637.2 L875.2 642.3 M875.2 642.3 L876.7 627.2 M875.2 642.3 L897.3 653.3 M897.3 653.3 L904.5 638.4 M897.3 653.3 L919.7 671.3 M801.3 651.4 L810.3 653.3 M810.3 653.3 L820.5 638.4 M810.3 653.3 L815.3 665.8 M804.4 667.3 L815.3 665.8 M815.3 665.8 L832.5 637.2 M815.3 665.8 L838.4 696.6 M838.4 696.6 L875.2 642.3 M838.4 696.6 L827.2 706.4 M838.4 696.6 L862.2 707.2 M862.2 707.2 L897.3 653.3 M862.2 707.2 L854.4 723.3 M862.2 707.2 L893.1 715.0 " fill="none" stroke="#200900" stroke-width="3" stroke-linecap="square" shape-rendering="crispEdges"/>
<path d="M815.3 632.2 L829.4 627.2 M829.4 627.2 L876.7 627.2 M876.7 627.2 L904.5 638.4 M904.5 638.4 L933.4 651.4 M933.4 651.4 L919.7 671.3 M919.7 671.3 L893.1 715.0 M893.1 715.0 L885.3 739.5 M885.3 739.5 L854.4 723.3 M854.4 723.3 L827.2 706.4 M827.2 706.4 L804.4 667.3 M804.4 667.3 L801.3 651.4 M801.3 651.4 L815.3 632.2 M829.4 627.2 L832.5 637.2 M815.3 632.2 L820.5 638.4 M820.5 638.4 L832.5 637.2 M832.5 637.2 L875.2 642.3 M875.2 642.3 L876.7 627.2 M875.2 642.3 L897.3 653.3 M897.3 653.3 L904.5 638.4 M897.3 653.3 L919.7 671.3 M801.3 651.4 L810.3 653.3 M810.3 653.3 L820.5 638.4 M810.3 653.3 L815.3 665.8 M804.4 667.3 L815.3 665.8 M815.3 665.8 L832.5 637.2 M815.3 665.8 L838.4 696.6 M838.4 696.6 L875.2 642.3 M838.4 696.6 L827.2 706.4 M838.4 696.6 L862.2 707.2 M862.2 707.2 L897.3 653.3 M862.2 707.2 L854.4 723.3 M862.2 707.2 L893.1 715.0 " fill="none" stroke="#ffb452" stroke-width="1" shape-rendering="crispEdges"/>
<path d="M886.4 605.2 L933.8 605.2 L933.8 627.5 L886.4 627.5 Z " fill="#866741" fill-rule="evenodd"/>
<path d="M886.4 605.2 L933.8 605.2 M933.8 605.2 L933.8 627.5 M933.8 627.5 L886.4 627.5 M886.4 627.5 L886.4 605.2 " fill="none" stroke="#200900" stroke-width="3" stroke-linecap="square" shape-rendering="crispEdges"/>
<path d="M886.4 605.2 L933.8 605.2 M933.8 605.2 L933.8 627.5 M933.8 627.5 L886.4 627.5 M886.4 627.5 L886.4 605.2 " fill="none" stroke="#ffb452" stroke-width="1" shape-rendering="crispEdges"/>
<path d="M966.1 560.4 L980.5 560.4 L997.5 579.4 L997.5 601.4 L989.3 637.3 L984.0 665.0 L979.5 690.1 L979.5 739.1 L933.3 739.1 L938.5 690.1 L939.5 637.3 L942.6 601.0 L949.3 580.5 Z " fill="#866741" fill-rule="evenodd"/>
<path d="" fill="none" stroke="#200900" stroke-width="3" stroke-linecap="square" shape-rendering="crispEdges"/>
<path d="" fill="none" stroke="#ffb452" stroke-width="1" shape-rendering="crispEdges"/>
<polygon points="942.6,601.0 997.5,601.4 989.3,637.3 939.5,637.3" fill="url(#dots)"/>
<path d="M966.1 560.4 L966.1 560.4 L966.1 560.4 Z " fill="#866741" fill-rule="evenodd"/>
<path d="M966.1 560.4 L980.5 560.4 M980.5 560.4 L997.5 579.4 M997.5 579.4 L997.5 601.4 M997.5 601.4 L989.3 637.3 M989.3 637.3 L984.0 665.0 M984.0 665.0 L979.5 690.1 M979.5 690.1 L979.5 739.1 M979.5 739.1 L933.3 739.1 M933.3 739.1 L938.5 690.1 M938.5 690.1 L939.5 637.3 M939.5 637.3 L942.6 601.0 M942.6 601.0 L949.3 580.5 M949.3 580.5 L966.1 560.4 M949.3 580.5 L997.5 579.4 M942.6 601.0 L997.5 601.4 M939.5 637.3 L989.3 637.3 M938.5 690.1 L979.5 690.1 " fill="none" stroke="#200900" stroke-width="3" stroke-linecap="square" shape-rendering="crispEdges"/>
<path d="M966.1 560.4 L980.5 560.4 M980.5 560.4 L997.5 579.4 M997.5 579.4 L997.5 601.4 M997.5 601.4 L989.3 637.3 M989.3 637.3 L984.0 665.0 M984.0 665.0 L979.5 690.1 M979.5 690.1 L979.5 739.1 M979.5 739.1 L933.3 739.1 M933.3 739.1 L938.5 690.1 M938.5 690.1 L939.5 637.3 M939.5 637.3 L942.6 601.0 M942.6 601.0 L949.3 580.5 M949.3 580.5 L966.1 560.4 M949.3 580.5 L997.5 579.4 M942.6 601.0 L997.5 601.4 M939.5 637.3 L989.3 637.3 M938.5 690.1 L979.5 690.1 " fill="none" stroke="#ffb452" stroke-width="1" shape-rendering="crispEdges"/>
<path d="M1029.7 637.3 L1070.7 660.4 L1070.3 690.1 L1064.5 717.2 L1029.7 739.1 L999.5 735.2 L998.3 700.2 L1000.4 667.4 L1011.2 650.6 Z " fill="#866741" fill-rule="evenodd"/>
<path d="M1029.7 637.3 L1070.7 660.4 M1070.7 660.4 L1070.3 690.1 M1070.3 690.1 L1064.5 717.2 M1064.5 717.2 L1029.7 739.1 M1029.7 739.1 L999.5 735.2 M999.5 735.2 L998.3 700.2 M998.3 700.2 L1000.4 667.4 M1000.4 667.4 L1011.2 650.6 M1011.2 650.6 L1029.7 637.3 " fill="none" stroke="#200900" stroke-width="3" stroke-linecap="square" shape-rendering="crispEdges"/>
<path d="M1029.7 637.3 L1070.7 660.4 M1070.7 660.4 L1070.3 690.1 M1070.3 690.1 L1064.5 717.2 M1064.5 717.2 L1029.7 739.1 M1029.7 739.1 L999.5 735.2 M999.5 735.2 L998.3 700.2 M998.3 700.2 L1000.4 667.4 M1000.4 667.4 L1011.2 650.6 M1011.2 650.6 L1029.7 637.3 " fill="none" stroke="#ffb452" stroke-width="1" shape-rendering="crispEdges"/>
<path d="M747.6 739.4 L717.9 753.1 L693.7 775.6 L673.5 815.3 L670.1 829.5 L670.1 854.2 L674.6 869.2 L698.2 909.2 L720.6 931.4 L747.6 944.4 L792.5 916.4 L843.0 891.2 L932.1 845.6 L927.2 841.6 L841.4 792.2 L789.1 770.0 Z M756.5 808.6 L801.0 819.4 L862.1 835.1 L927.2 841.6 L932.1 845.6 L867.0 850.6 L804.2 865.4 L761.0 876.6 Z " fill="#866741" fill-rule="evenodd"/>
<path d="M747.6 739.4 L717.9 753.1 M717.9 753.1 L693.7 775.6 M693.7 775.6 L673.5 815.3 M673.5 815.3 L670.1 829.5 M670.1 829.5 L670.1 854.2 M670.1 854.2 L674.6 869.2 M674.6 869.2 L698.2 909.2 M698.2 909.2 L720.6 931.4 M720.6 931.4 L747.6 944.4 M747.6 944.4 L792.5 916.4 M792.5 916.4 L843.0 891.2 M843.0 891.2 L932.1 845.6 M932.1 845.6 L927.2 841.6 M927.2 841.6 L841.4 792.2 M841.4 792.2 L789.1 770.0 M789.1 770.0 L747.6 739.4 M728.5 812.4 L756.5 808.6 M756.5 808.6 L801.0 819.4 M801.0 819.4 L862.1 835.1 M862.1 835.1 L927.2 841.6 M735.2 871.0 L761.0 876.6 M761.0 876.6 L804.2 865.4 M804.2 865.4 L867.0 850.6 M867.0 850.6 L932.1 845.6 M717.9 753.1 L756.5 808.6 M693.7 775.6 L728.5 812.4 M747.6 739.4 L801.0 819.4 M789.1 770.0 L862.1 835.1 M673.5 815.3 L698.6 827.2 M670.1 829.5 L689.2 833.3 M670.1 854.2 L690.3 848.3 M674.6 869.2 L700.4 855.7 M698.6 827.2 L689.2 833.3 M689.2 833.3 L690.3 848.3 M690.3 848.3 L700.4 855.7 M698.6 827.2 L700.4 855.7 M698.6 827.2 L728.5 812.4 M700.4 855.7 L735.2 871.0 M728.5 812.4 L735.2 871.0 M756.5 808.6 L761.0 876.6 M735.2 871.0 L698.2 909.2 M761.0 876.6 L720.6 931.4 M804.2 865.4 L747.6 944.4 M867.0 850.6 L792.5 916.4 " fill="none" stroke="#200900" stroke-width="3" stroke-linecap="square" shape-rendering="crispEdges"/>
<path d="M747.6 739.4 L717.9 753.1 M717.9 753.1 L693.7 775.6 M693.7 775.6 L673.5 815.3 M673.5 815.3 L670.1 829.5 M670.1 829.5 L670.1 854.2 M670.1 854.2 L674.6 869.2 M674.6 869.2 L698.2 909.2 M698.2 909.2 L720.6 931.4 M720.6 931.4 L747.6 944.4 M747.6 944.4 L792.5 916.4 M792.5 916.4 L843.0 891.2 M843.0 891.2 L932.1 845.6 M932.1 845.6 L927.2 841.6 M927.2 841.6 L841.4 792.2 M841.4 792.2 L789.1 770.0 M789.1 770.0 L747.6 739.4 M728.5 812.4 L756.5 808.6 M756.5 808.6 L801.0 819.4 M801.0 819.4 L862.1 835.1 M862.1 835.1 L927.2 841.6 M735.2 871.0 L761.0 876.6 M761.0 876.6 L804.2 865.4 M804.2 865.4 L867.0 850.6 M867.0 850.6 L932.1 845.6 M717.9 753.1 L756.5 808.6 M693.7 775.6 L728.5 812.4 M747.6 739.4 L801.0 819.4 M789.1 770.0 L862.1 835.1 M673.5 815.3 L698.6 827.2 M670.1 829.5 L689.2 833.3 M670.1 854.2 L690.3 848.3 M674.6 869.2 L700.4 855.7 M698.6 827.2 L689.2 833.3 M689.2 833.3 L690.3 848.3 M690.3 848.3 L700.4 855.7 M698.6 827.2 L700.4 855.7 M698.6 827.2 L728.5 812.4 M700.4 855.7 L735.2 871.0 M728.5 812.4 L735.2 871.0 M756.5 808.6 L761.0 876.6 M735.2 871.0 L698.2 909.2 M761.0 876.6 L720.6 931.4 M804.2 865.4 L747.6 944.4 M867.0 850.6 L792.5 916.4 " fill="none" stroke="#ffb452" stroke-width="1" shape-rendering="crispEdges"/>
<path d="M953.5 745.3 L967.4 743.0 L987.6 755.8 L997.3 773.4 L1009.7 809.3 L1015.3 867.5 L1015.3 915.8 L1009.4 935.2 L964.5 944.2 L952.4 927.3 L941.6 879.4 L932.6 823.3 L934.2 787.3 L939.3 767.1 Z M941.6 794.7 L946.1 775.6 L957.3 755.2 L968.5 752.5 L984.7 764.4 L992.1 782.4 Z " fill="#866741" fill-rule="evenodd"/>
<path d="M953.5 745.3 L967.4 743.0 M967.4 743.0 L987.6 755.8 M987.6 755.8 L997.3 773.4 M997.3 773.4 L1009.7 809.3 M1009.7 809.3 L1015.3 867.5 M1015.3 867.5 L1015.3 915.8 M1015.3 915.8 L1009.4 935.2 M1009.4 935.2 L964.5 944.2 M964.5 944.2 L952.4 927.3 M952.4 927.3 L941.6 879.4 M941.6 879.4 L932.6 823.3 M932.6 823.3 L934.2 787.3 M934.2 787.3 L939.3 767.1 M939.3 767.1 L953.5 745.3 M941.6 794.7 L946.1 775.6 M946.1 775.6 L957.3 755.2 M957.3 755.2 L968.5 752.5 M968.5 752.5 L984.7 764.4 M984.7 764.4 L992.1 782.4 M953.5 745.3 L957.3 755.2 M967.4 743.0 L968.5 752.5 M987.6 755.8 L984.7 764.4 M997.3 773.4 L992.1 782.4 M939.3 767.1 L946.1 775.6 M934.2 787.3 L941.6 794.7 M941.6 794.7 L992.1 782.4 M992.1 782.4 L1000.4 827.1 M941.6 794.7 L945.6 838.5 M1000.4 827.1 L945.6 838.5 M1000.4 827.1 L1009.7 809.3 M1000.4 827.1 L1002.2 905.3 M945.6 838.5 L932.6 823.3 M945.6 838.5 L964.5 913.1 M1002.2 905.3 L964.5 913.1 M1002.2 905.3 L1015.3 867.5 M1002.2 905.3 L1009.4 935.2 M964.5 913.1 L941.6 879.4 M964.5 913.1 L964.5 944.2 " fill="none" stroke="#200900" stroke-width="3" stroke-linecap="square" shape-rendering="crispEdges"/>
<path d="M953.5 745.3 L967.4 743.0 M967.4 743.0 L987.6 755.8 M987.6 755.8 L997.3 773.4 M997.3 773.4 L1009.7 809.3 M1009.7 809.3 L1015.3 867.5 M1015.3 867.5 L1015.3 915.8 M1015.3 915.8 L1009.4 935.2 M1009.4 935.2 L964.5 944.2 M964.5 944.2 L952.4 927.3 M952.4 927.3 L941.6 879.4 M941.6 879.4 L932.6 823.3 M932.6 823.3 L934.2 787.3 M934.2 787.3 L939.3 767.1 M939.3 767.1 L953.5 745.3 M941.6 794.7 L946.1 775.6 M946.1 775.6 L957.3 755.2 M957.3 755.2 L968.5 752.5 M968.5 752.5 L984.7 764.4 M984.7 764.4 L992.1 782.4 M953.5 745.3 L957.3 755.2 M967.4 743.0 L968.5 752.5 M987.6 755.8 L984.7 764.4 M997.3 773.4 L992.1 782.4 M939.3 767.1 L946.1 775.6 M934.2 787.3 L941.6 794.7 M941.6 794.7 L992.1 782.4 M992.1 782.4 L1000.4 827.1 M941.6 794.7 L945.6 838.5 M1000.4 827.1 L945.6 838.5 M1000.4 827.1 L1009.7 809.3 M1000.4 827.1 L1002.2 905.3 M945.6 838.5 L932.6 823.3 M945.6 838.5 L964.5 913.1 M1002.2 905.3 L964.5 913.1 M1002.2 905.3 L1015.3 867.5 M1002.2 905.3 L1009.4 935.2 M964.5 913.1 L941.6 879.4 M964.5 913.1 L964.5 944.2 " fill="none" stroke="#ffb452" stroke-width="1" shape-rendering="crispEdges"/>
<path d="M668.5 614.6h3.4v3.4h-3.4zM681.7 598.7h3.4v3.4h-3.4zM699.7 582.7h3.4v3.4h-3.4zM713.0 580.8h3.4v3.4h-3.4zM734.9 588.6h3.4v3.4h-3.4zM750.5 599.7h3.4v3.4h-3.4zM799.7 622.3h3.4v3.4h-3.4zM683.7 638.3h3.4v3.4h-3.4zM695.3 634.5h3.4v3.4h-3.4zM710.6 631.0h3.4v3.4h-3.4zM718.8 629.6h3.4v3.4h-3.4zM734.9 628.6h3.4v3.4h-3.4zM746.8 628.6h3.4v3.4h-3.4zM777.3 641.9h3.4v3.4h-3.4zM702.8 691.7h3.4v3.4h-3.4zM709.7 690.5h3.4v3.4h-3.4zM717.5 689.6h3.4v3.4h-3.4zM724.7 688.6h3.4v3.4h-3.4zM732.5 688.6h3.4v3.4h-3.4zM739.7 688.6h3.4v3.4h-3.4zM756.5 691.7h3.4v3.4h-3.4zM713.0 737.3h3.4v3.4h-3.4zM717.9 731.5h3.4v3.4h-3.4zM723.7 726.3h3.4v3.4h-3.4zM725.7 725.7h3.4v3.4h-3.4zM729.6 729.8h3.4v3.4h-3.4zM735.8 735.6h3.4v3.4h-3.4zM744.8 737.3h3.4v3.4h-3.4zM749.7 737.3h3.4v3.4h-3.4zM827.7 625.5h3.4v3.4h-3.4zM875.0 625.5h3.4v3.4h-3.4zM902.8 636.7h3.4v3.4h-3.4zM931.7 649.7h3.4v3.4h-3.4zM813.6 630.5h3.4v3.4h-3.4zM818.8 636.7h3.4v3.4h-3.4zM830.8 635.5h3.4v3.4h-3.4zM873.5 640.6h3.4v3.4h-3.4zM895.6 651.6h3.4v3.4h-3.4zM918.0 669.6h3.4v3.4h-3.4zM799.6 649.7h3.4v3.4h-3.4zM808.6 651.6h3.4v3.4h-3.4zM802.7 665.6h3.4v3.4h-3.4zM813.6 664.1h3.4v3.4h-3.4zM836.7 694.9h3.4v3.4h-3.4zM860.5 705.5h3.4v3.4h-3.4zM891.4 713.3h3.4v3.4h-3.4zM825.5 704.7h3.4v3.4h-3.4zM852.7 721.6h3.4v3.4h-3.4zM883.6 737.8h3.4v3.4h-3.4zM884.7 603.5h3.4v3.4h-3.4zM932.1 603.5h3.4v3.4h-3.4zM932.1 625.8h3.4v3.4h-3.4zM884.7 625.8h3.4v3.4h-3.4zM964.4 558.7h3.4v3.4h-3.4zM978.8 558.7h3.4v3.4h-3.4zM995.8 577.7h3.4v3.4h-3.4zM947.6 578.8h3.4v3.4h-3.4zM940.9 599.3h3.4v3.4h-3.4zM995.8 599.7h3.4v3.4h-3.4zM937.8 635.6h3.4v3.4h-3.4zM987.6 635.6h3.4v3.4h-3.4zM936.8 688.4h3.4v3.4h-3.4zM977.8 688.4h3.4v3.4h-3.4zM931.6 737.4h3.4v3.4h-3.4zM977.8 737.4h3.4v3.4h-3.4zM1028.0 635.6h3.4v3.4h-3.4zM1069.0 658.7h3.4v3.4h-3.4zM1068.6 688.4h3.4v3.4h-3.4zM1062.8 715.5h3.4v3.4h-3.4zM1028.0 737.4h3.4v3.4h-3.4zM997.8 733.5h3.4v3.4h-3.4zM996.6 698.5h3.4v3.4h-3.4zM998.7 665.7h3.4v3.4h-3.4zM1009.5 648.9h3.4v3.4h-3.4zM745.9 737.7h3.4v3.4h-3.4zM716.2 751.4h3.4v3.4h-3.4zM692.0 773.9h3.4v3.4h-3.4zM671.8 813.6h3.4v3.4h-3.4zM668.4 827.8h3.4v3.4h-3.4zM668.4 852.5h3.4v3.4h-3.4zM672.9 867.5h3.4v3.4h-3.4zM696.5 907.5h3.4v3.4h-3.4zM718.9 929.7h3.4v3.4h-3.4zM745.9 942.7h3.4v3.4h-3.4zM790.8 914.7h3.4v3.4h-3.4zM841.3 889.5h3.4v3.4h-3.4zM930.4 843.9h3.4v3.4h-3.4zM925.5 839.9h3.4v3.4h-3.4zM839.7 790.5h3.4v3.4h-3.4zM787.4 768.3h3.4v3.4h-3.4zM726.8 810.7h3.4v3.4h-3.4zM754.8 806.9h3.4v3.4h-3.4zM799.3 817.7h3.4v3.4h-3.4zM860.4 833.4h3.4v3.4h-3.4zM696.9 825.5h3.4v3.4h-3.4zM687.5 831.6h3.4v3.4h-3.4zM688.6 846.6h3.4v3.4h-3.4zM698.7 854.0h3.4v3.4h-3.4zM733.5 869.3h3.4v3.4h-3.4zM759.3 874.9h3.4v3.4h-3.4zM802.5 863.7h3.4v3.4h-3.4zM865.3 848.9h3.4v3.4h-3.4zM951.8 743.6h3.4v3.4h-3.4zM965.7 741.3h3.4v3.4h-3.4zM985.9 754.1h3.4v3.4h-3.4zM995.6 771.7h3.4v3.4h-3.4zM1008.0 807.6h3.4v3.4h-3.4zM1013.6 865.8h3.4v3.4h-3.4zM1013.6 914.1h3.4v3.4h-3.4zM1007.7 933.5h3.4v3.4h-3.4zM962.8 942.5h3.4v3.4h-3.4zM950.7 925.6h3.4v3.4h-3.4zM939.9 877.7h3.4v3.4h-3.4zM930.9 821.6h3.4v3.4h-3.4zM932.5 785.6h3.4v3.4h-3.4zM937.6 765.4h3.4v3.4h-3.4zM955.6 753.5h3.4v3.4h-3.4zM966.8 750.8h3.4v3.4h-3.4zM983.0 762.7h3.4v3.4h-3.4zM990.4 780.7h3.4v3.4h-3.4zM944.4 773.9h3.4v3.4h-3.4zM939.9 793.0h3.4v3.4h-3.4zM998.7 825.4h3.4v3.4h-3.4zM943.9 836.8h3.4v3.4h-3.4zM1000.5 903.6h3.4v3.4h-3.4zM962.8 911.4h3.4v3.4h-3.4z" fill="#f8a232"/>
<line x1="644.6" y1="944.4" x2="696.6" y2="944.4" stroke="#fff" stroke-width="1" stroke-dasharray="1 1.5"/>
<line x1="670.6" y1="919.4" x2="670.6" y2="969.4" stroke="#fff" stroke-width="1" stroke-dasharray="1 1.5"/>
<rect x="661.6" y="942.9" width="18.0" height="3.0" fill="#363636" />
<rect x="669.1" y="935.4" width="3.0" height="18.0" fill="#363636" />
<polyline points="670.6,932.4 682.6,944.4 670.6,956.4 658.6,944.4 670.6,932.4" fill="none" stroke="#ffffff" stroke-width="1.2" />
<polyline points="670.6,932.4 682.6,944.4 670.6,956.4 658.6,944.4 670.6,932.4" fill="none" stroke="#a03030" stroke-width="1.4" stroke-dasharray="5 12" stroke-dashoffset="-6"/>
</g>
</svg></body></html>
